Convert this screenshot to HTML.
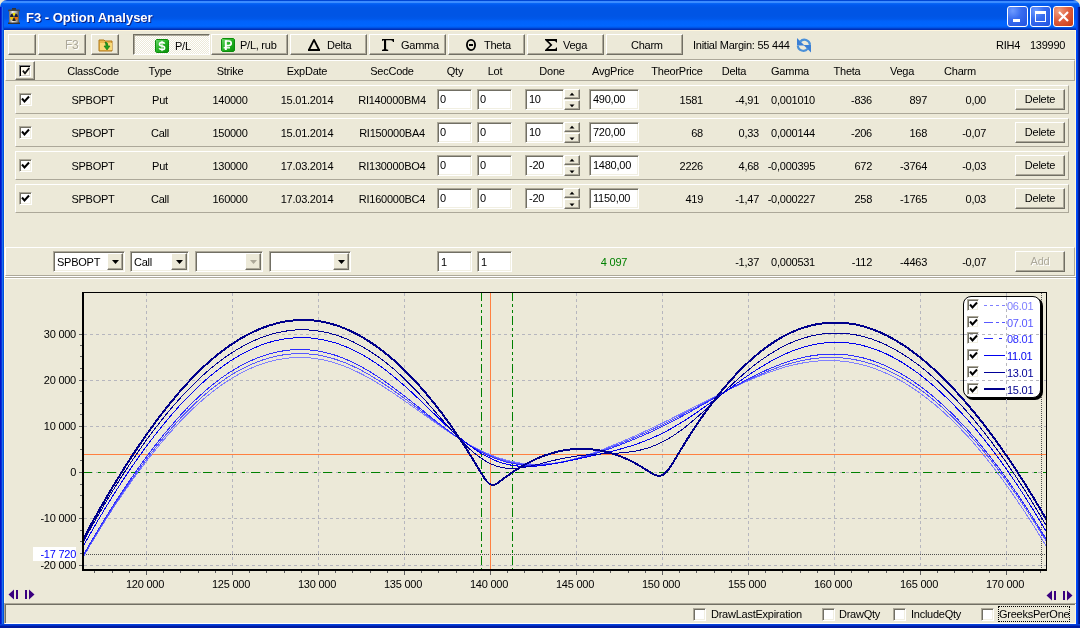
<!DOCTYPE html>
<html><head><meta charset="utf-8">
<style>
*{box-sizing:border-box;margin:0;padding:0}
html,body{width:1080px;height:628px;overflow:hidden;background:#ECE9D8}
body{position:relative;font-family:"Liberation Sans",sans-serif;font-size:11px;color:#000}
.a{position:absolute}
.t{position:absolute;will-change:transform;white-space:nowrap;line-height:13px;letter-spacing:-0.25px}
.c{text-align:center}
.r{text-align:right}
.btn{position:absolute;background:#ECE9D8;border-top:1px solid #fff;border-left:1px solid #fff;border-right:1px solid #716F64;border-bottom:1px solid #716F64;box-shadow:inset -1px -1px 0 #ACA899}
.inp{position:absolute;background:#fff;border-top:1px solid #ACA899;border-left:1px solid #ACA899;border-right:1px solid #fff;border-bottom:1px solid #fff;box-shadow:inset 1px 1px 0 #716F64,inset -1px -1px 0 #F1EFE2}
.pnl{position:absolute;border-top:1px solid #fff;border-left:1px solid #fff;border-right:1px solid #ACA899;border-bottom:1px solid #ACA899}
.cb{position:absolute;width:13px;height:13px;background:#fff;border-top:1px solid #ACA899;border-left:1px solid #ACA899;border-right:1px solid #fff;border-bottom:1px solid #fff;box-shadow:inset 1px 1px 0 #716F64,inset -1px -1px 0 #F1EFE2}
</style></head><body>
<!-- title bar -->
<div class="a" style="left:0;top:0;width:1080px;height:30px;border-radius:7px 7px 0 0;background:linear-gradient(#0046D5 0px,#0046D5 1px,#3C8CFF 1px,#3C8CFF 3px,#0A6AF8 3px,#0058EE 5px,#0055E5 8px,#0055E5 16px,#0058EA 19px,#0062FB 21px,#0066FF 26px,#0050E0 28px,#0030B8 29px,#0030B8 30px)"></div>
<!-- borders -->
<div class="a" style="left:0;top:7px;width:4px;height:621px;background:linear-gradient(90deg,#0014C8 0,#0014C8 1px,#0A30D8 1px,#0A30D8 2px,#1A6FEE 2px,#1A6FEE 3px,#0050DC 3px,#0050DC 4px)"></div>
<div class="a" style="left:1076px;top:7px;width:4px;height:621px;background:linear-gradient(90deg,#0046FF 0,#0046FF 1px,#0044E0 1px,#0044E0 2px,#0020A0 2px,#0020A0 3px,#001080 3px)"></div>
<div class="a" style="left:0;top:624px;width:1080px;height:4px;background:linear-gradient(#0841D9 0,#0841D9 1px,#0030C8 1px,#0030C8 2px,#001A9E 2px)"></div>
<div class="a" style="left:4px;top:30px;width:1px;height:594px;background:#FFF6DC"></div>
<div class="a" style="left:1075px;top:30px;width:1px;height:594px;background:#FFF6DC"></div>
<div class="a" style="left:4px;top:30px;width:1072px;height:1px;background:#FFF6DC"></div>

<div class="t" style="left:26px;top:10px;letter-spacing:0;font-size:13px;font-weight:bold;color:#fff;text-shadow:1px 1px 0 #0A1E80;line-height:16px">F3 - Option Analyser</div>
<svg class="a" style="left:7px;top:7px" width="14" height="18" viewBox="0 0 14 18">
<defs><linearGradient id="can" x1="0" x2="1"><stop offset="0" stop-color="#6a6a6a"/><stop offset="0.35" stop-color="#e8e8e8"/><stop offset="0.7" stop-color="#b0b0b0"/><stop offset="1" stop-color="#505050"/></linearGradient></defs>
<rect x="5" y="1" width="4" height="2" fill="#333"/>
<rect x="1" y="2.5" width="12" height="2" rx="1" fill="#444"/>
<rect x="2" y="4" width="10" height="12" fill="url(#can)"/>
<rect x="1" y="15.5" width="12" height="1.5" fill="#333"/>
<path d="M7 10 L5.2 6.3 A4 4 0 0 1 8.8 6.3 Z" fill="#f0e000"/>
<path d="M7 10 L3 10 A4 4 0 0 1 5.2 6.3 Z" fill="#1a1a3a"/>
<path d="M7 10 L8.8 6.3 A4 4 0 0 1 11 10 Z" fill="#1a1a3a"/>
<path d="M7 10 L3 10 A4 4 0 0 0 5 13.5 Z" fill="#f0c000"/>
<path d="M7 10 L11 10 A4 4 0 0 1 9 13.5 Z" fill="#f07000"/>
<path d="M7 10 L5 13.5 A4 4 0 0 0 9 13.5 Z" fill="#222"/>
</svg>
<!-- caption buttons -->
<div class="a" style="left:1007px;top:6px;width:21px;height:21px;border:1px solid #fff;border-radius:3px;background:radial-gradient(circle at 25% 20%,#6E9BFF 0,#3A6EF0 40%,#2052E0 100%)"><div class="a" style="left:5px;top:12px;width:7px;height:3px;background:#fff"></div></div>
<div class="a" style="left:1030px;top:6px;width:21px;height:21px;border:1px solid #fff;border-radius:3px;background:radial-gradient(circle at 25% 20%,#6E9BFF 0,#3A6EF0 40%,#2052E0 100%)"><div class="a" style="left:4px;top:4px;width:11px;height:11px;border:1px solid #fff;border-top-width:3px"></div></div>
<div class="a" style="left:1053px;top:6px;width:21px;height:21px;border:1px solid #fff;border-radius:3px;background:radial-gradient(circle at 25% 20%,#F0A080 0,#E06040 45%,#C83810 100%)">
<svg class="a" style="left:3px;top:3px" width="13" height="13"><path d="M2 2 L11 11 M11 2 L2 11" stroke="#fff" stroke-width="2.2"/></svg></div>

<!-- toolbar -->
<div class="btn" style="left:8px;top:34px;width:28px;height:21px"></div>
<div class="btn" style="left:38px;top:34px;width:48px;height:21px"><div class="t" style="right:6px;top:4px;color:#ACA899;text-shadow:1px 1px 0 #fff;font-size:12px">F3</div></div>
<div class="btn" style="left:91px;top:34px;width:28px;height:21px">
<svg class="a" style="left:6px;top:3px" width="16" height="14" viewBox="0 0 16 14"><path d="M1 2 h5 l1 1 h7 v10 h-13 z" fill="#E8B850" stroke="#B07818"/><path d="M2 5 h12 v7 h-12z" fill="#F8D878"/><path d="M7 4 q3 0 3 4 h2 l-3 4 l-3 -4 h2 q0 -2 -1 -4z" fill="#20A020" stroke="#107010" stroke-width="0.6"/></svg></div>
<div class="a" style="left:133px;top:34px;width:77px;height:21px;border-top:1px solid #716F64;border-left:1px solid #716F64;border-right:1px solid #fff;border-bottom:1px solid #fff;box-shadow:inset 1px 1px 0 #ACA899;background:repeating-conic-gradient(#fff 0 25%,#ECE9D8 0 50%) 0 0/2px 2px"></div>
<div class="btn" style="left:211px;top:34px;width:77px;height:21px"></div>
<div class="btn" style="left:290px;top:34px;width:77px;height:21px"></div>
<div class="btn" style="left:369px;top:34px;width:77px;height:21px"></div>
<div class="btn" style="left:448px;top:34px;width:77px;height:21px"></div>
<div class="btn" style="left:527px;top:34px;width:77px;height:21px"></div>
<div class="btn" style="left:606px;top:34px;width:77px;height:21px"></div>


<!-- toolbar contents -->
<svg class="a" style="left:155px;top:39px" width="14" height="14" viewBox="0 0 14 14"><defs><linearGradient id="gr" x1="0" y1="0" x2="1" y2="1"><stop offset="0" stop-color="#6CD86C"/><stop offset="0.5" stop-color="#22B022"/><stop offset="1" stop-color="#0A900A"/></linearGradient></defs><path d="M1.5 0.5 H12.5 L13.5 1.5 V12.5 L12.5 13.5 H1.5 L0.5 12.5 V1.5 Z" fill="url(#gr)" stroke="#0C8C0C" stroke-width="1"/><path d="M9.6 4.7 Q9.2 3.4 7 3.4 Q4.5 3.4 4.5 5.2 Q4.5 6.8 7 7 Q9.6 7.2 9.6 8.9 Q9.6 10.6 7 10.6 Q4.7 10.6 4.2 9.3" fill="none" stroke="#fff" stroke-width="1.6"/><path d="M7 1.8 V12.2" stroke="#fff" stroke-width="1"/></svg>
<div class="t" style="left:175px;top:40px">P/L</div>
<svg class="a" style="left:221px;top:38px" width="14" height="14" viewBox="0 0 14 14"><path d="M1.5 0.5 H12.5 L13.5 1.5 V12.5 L12.5 13.5 H1.5 L0.5 12.5 V1.5 Z" fill="url(#gr)" stroke="#0C8C0C" stroke-width="1"/><path d="M4.8 3 H7.6 Q10.2 3 10.2 5.3 Q10.2 7.6 7.6 7.6 H4.8" fill="none" stroke="#fff" stroke-width="1.7"/><path d="M4.8 2.2 V12" stroke="#fff" stroke-width="2"/><path d="M2.6 9.8 H9" stroke="#fff" stroke-width="1.4"/></svg>
<div class="t" style="left:240px;top:39px">P/L, rub</div>
<svg class="a" style="left:308px;top:39px" width="12" height="12" viewBox="0 0 12 12"><path d="M6 0.9 L11.1 11 L0.9 11 Z" fill="none" stroke="#000" stroke-width="1.8" stroke-linejoin="round"/><rect x="0" y="10" width="12" height="2" fill="#000"/></svg>
<div class="t" style="left:327px;top:39px">Delta</div>
<svg class="a" style="left:382px;top:39px" width="12" height="12" viewBox="0 0 12 12"><path d="M0 0 H12 V3 H11 Q10.8 1.3 9 1.3 H4.1 V10 Q4.3 10.7 6.2 10.8 V12 H0 V10.8 Q1.8 10.7 2 10 V1.3 Q1 1.3 0 2.2 Z" fill="#000"/></svg>
<div class="t" style="left:401px;top:39px">Gamma</div>
<svg class="a" style="left:466px;top:39px" width="10" height="12" viewBox="0 0 10 12"><ellipse cx="5" cy="6" rx="4.1" ry="5.1" fill="none" stroke="#000" stroke-width="1.8"/><rect x="3" y="5" width="4" height="2" fill="#000"/></svg>
<div class="t" style="left:484px;top:39px">Theta</div>
<svg class="a" style="left:545px;top:39px" width="12" height="12" viewBox="0 0 12 12"><path d="M0 0 H12 V3.5 H11.2 Q10.9 2 9.4 2 H3.4 L7.4 6 L3.1 10 H9.4 Q10.9 10 11.2 8.5 H12 V12 H0 V11 L5.1 6 L0 1 Z" fill="#000"/></svg>
<div class="t" style="left:563px;top:39px">Vega</div>
<div class="t" style="left:631px;top:39px">Charm</div>
<div class="t" style="left:693px;top:39px">Initial Margin: 55 444</div>
<svg class="a" style="left:796px;top:37px" width="16" height="16" viewBox="0 0 16 16"><path d="M1 1 L1 8.5 L8.5 8.5 Z" fill="#3A7FD5"/><path d="M4.2 4.6 A5.6 5.6 0 0 1 14 7.8" fill="none" stroke="#4A90D8" stroke-width="2.2"/><path d="M15 15.5 L15 8 L7.5 8 Z" fill="#3A7FD5"/><path d="M1.8 8.6 A5.6 5.6 0 0 0 11.8 11.6" fill="none" stroke="#4A90D8" stroke-width="2.2"/></svg>
<div class="t" style="left:996px;top:39px">RIH4</div><div class="t" style="left:1030px;top:39px">139990</div>



<!-- separator under toolbar -->
<div class="a" style="left:5px;top:59px;width:1070px;height:1px;background:#ACA899"></div>
<!-- header -->
<div class="pnl" style="left:5px;top:60px;width:1070px;height:21px"></div>
<div class="btn" style="left:15px;top:61px;width:20px;height:19px"><div class="a" style="left:3px;top:3px;width:12px;height:12px;background:#FFFBF0;border-top:1px solid #808080;border-left:1px solid #808080;border-right:1px solid #fff;border-bottom:1px solid #fff;box-shadow:inset 1px 1px 0 #000,inset -1px -1px 0 #D4D0C8"></div>
<svg class="a" style="left:6px;top:5px" width="8" height="9"><path d="M0.8 3.6 L3 6.3 L7.2 1" stroke="#111" fill="none" stroke-width="1.7"/></svg></div>
<div class="t c" style="left:53.2px;top:65px;width:80px">ClassCode</div>
<div class="t c" style="left:119.8px;top:65px;width:80px">Type</div>
<div class="t c" style="left:190.0px;top:65px;width:80px">Strike</div>
<div class="t c" style="left:267.0px;top:65px;width:80px">ExpDate</div>
<div class="t c" style="left:352.3px;top:65px;width:80px">SecCode</div>
<div class="t c" style="left:414.5px;top:65px;width:80px">Qty</div>
<div class="t c" style="left:454.8px;top:65px;width:80px">Lot</div>
<div class="t c" style="left:512.2px;top:65px;width:80px">Done</div>
<div class="t c" style="left:573.3px;top:65px;width:80px">AvgPrice</div>
<div class="t c" style="left:637.3px;top:65px;width:80px">TheorPrice</div>
<div class="t c" style="left:693.5px;top:65px;width:80px">Delta</div>
<div class="t c" style="left:750.0px;top:65px;width:80px">Gamma</div>
<div class="t c" style="left:806.7px;top:65px;width:80px">Theta</div>
<div class="t c" style="left:861.8px;top:65px;width:80px">Vega</div>
<div class="t c" style="left:920.0px;top:65px;width:80px">Charm</div>
<div class="pnl" style="left:15px;top:85px;width:1054px;height:29px"></div>
<div class="cb" style="left:19px;top:93px"></div><svg class="a" style="left:21px;top:95px" width="9" height="9"><path d="M1 3.5 L3.5 6.5 L8 1.5" stroke="#000" fill="none" stroke-width="2"/></svg>
<div class="t c" style="left:53.2px;top:94px;width:80px">SPBOPT</div>
<div class="t c" style="left:119.8px;top:94px;width:80px">Put</div>
<div class="t c" style="left:190.0px;top:94px;width:80px">140000</div>
<div class="t c" style="left:267.0px;top:94px;width:80px">15.01.2014</div>
<div class="t c" style="left:352.3px;top:94px;width:80px">RI140000BM4</div>
<div class="inp" style="left:437px;top:89px;width:35px;height:21px"><div class="t" style="left:2px;top:3px">0</div></div>
<div class="inp" style="left:477px;top:89px;width:35px;height:21px"><div class="t" style="left:2px;top:3px">0</div></div>
<div class="inp" style="left:525px;top:89px;width:39px;height:21px"><div class="t" style="left:3px;top:3px">10</div></div>
<div class="btn" style="left:564px;top:89px;width:16px;height:10px"><svg class="a" style="left:4px;top:2px" width="6" height="4"><path d="M0.5 3.5 L3 0.8 L5.5 3.5Z" fill="#000"/></svg></div>
<div class="btn" style="left:564px;top:100px;width:16px;height:10px"><svg class="a" style="left:4px;top:3px" width="6" height="4"><path d="M0.5 0.5 L3 3.2 L5.5 0.5Z" fill="#000"/></svg></div>
<div class="inp" style="left:589px;top:89px;width:50px;height:21px"><div class="t" style="left:3px;top:3px">490,00</div></div>
<div class="t r" style="left:623.0px;top:94px;width:80px">1581</div>
<div class="t r" style="left:679.0px;top:94px;width:80px">-4,91</div>
<div class="t r" style="left:735.2px;top:94px;width:80px">0,001010</div>
<div class="t r" style="left:791.5px;top:94px;width:80px">-836</div>
<div class="t r" style="left:847.4px;top:94px;width:80px">897</div>
<div class="t r" style="left:905.6px;top:94px;width:80px">0,00</div>
<div class="btn" style="left:1015px;top:89px;width:50px;height:21px"><div class="t c" style="left:0;top:3px;width:48px">Delete</div></div>
<div class="pnl" style="left:15px;top:118px;width:1054px;height:29px"></div>
<div class="cb" style="left:19px;top:126px"></div><svg class="a" style="left:21px;top:128px" width="9" height="9"><path d="M1 3.5 L3.5 6.5 L8 1.5" stroke="#000" fill="none" stroke-width="2"/></svg>
<div class="t c" style="left:53.2px;top:127px;width:80px">SPBOPT</div>
<div class="t c" style="left:119.8px;top:127px;width:80px">Call</div>
<div class="t c" style="left:190.0px;top:127px;width:80px">150000</div>
<div class="t c" style="left:267.0px;top:127px;width:80px">15.01.2014</div>
<div class="t c" style="left:352.3px;top:127px;width:80px">RI150000BA4</div>
<div class="inp" style="left:437px;top:122px;width:35px;height:21px"><div class="t" style="left:2px;top:3px">0</div></div>
<div class="inp" style="left:477px;top:122px;width:35px;height:21px"><div class="t" style="left:2px;top:3px">0</div></div>
<div class="inp" style="left:525px;top:122px;width:39px;height:21px"><div class="t" style="left:3px;top:3px">10</div></div>
<div class="btn" style="left:564px;top:122px;width:16px;height:10px"><svg class="a" style="left:4px;top:2px" width="6" height="4"><path d="M0.5 3.5 L3 0.8 L5.5 3.5Z" fill="#000"/></svg></div>
<div class="btn" style="left:564px;top:133px;width:16px;height:10px"><svg class="a" style="left:4px;top:3px" width="6" height="4"><path d="M0.5 0.5 L3 3.2 L5.5 0.5Z" fill="#000"/></svg></div>
<div class="inp" style="left:589px;top:122px;width:50px;height:21px"><div class="t" style="left:3px;top:3px">720,00</div></div>
<div class="t r" style="left:623.0px;top:127px;width:80px">68</div>
<div class="t r" style="left:679.0px;top:127px;width:80px">0,33</div>
<div class="t r" style="left:735.2px;top:127px;width:80px">0,000144</div>
<div class="t r" style="left:791.5px;top:127px;width:80px">-206</div>
<div class="t r" style="left:847.4px;top:127px;width:80px">168</div>
<div class="t r" style="left:905.6px;top:127px;width:80px">-0,07</div>
<div class="btn" style="left:1015px;top:122px;width:50px;height:21px"><div class="t c" style="left:0;top:3px;width:48px">Delete</div></div>
<div class="pnl" style="left:15px;top:151px;width:1054px;height:29px"></div>
<div class="cb" style="left:19px;top:159px"></div><svg class="a" style="left:21px;top:161px" width="9" height="9"><path d="M1 3.5 L3.5 6.5 L8 1.5" stroke="#000" fill="none" stroke-width="2"/></svg>
<div class="t c" style="left:53.2px;top:160px;width:80px">SPBOPT</div>
<div class="t c" style="left:119.8px;top:160px;width:80px">Put</div>
<div class="t c" style="left:190.0px;top:160px;width:80px">130000</div>
<div class="t c" style="left:267.0px;top:160px;width:80px">17.03.2014</div>
<div class="t c" style="left:352.3px;top:160px;width:80px">RI130000BO4</div>
<div class="inp" style="left:437px;top:155px;width:35px;height:21px"><div class="t" style="left:2px;top:3px">0</div></div>
<div class="inp" style="left:477px;top:155px;width:35px;height:21px"><div class="t" style="left:2px;top:3px">0</div></div>
<div class="inp" style="left:525px;top:155px;width:39px;height:21px"><div class="t" style="left:3px;top:3px">-20</div></div>
<div class="btn" style="left:564px;top:155px;width:16px;height:10px"><svg class="a" style="left:4px;top:2px" width="6" height="4"><path d="M0.5 3.5 L3 0.8 L5.5 3.5Z" fill="#000"/></svg></div>
<div class="btn" style="left:564px;top:166px;width:16px;height:10px"><svg class="a" style="left:4px;top:3px" width="6" height="4"><path d="M0.5 0.5 L3 3.2 L5.5 0.5Z" fill="#000"/></svg></div>
<div class="inp" style="left:589px;top:155px;width:50px;height:21px"><div class="t" style="left:3px;top:3px">1480,00</div></div>
<div class="t r" style="left:623.0px;top:160px;width:80px">2226</div>
<div class="t r" style="left:679.0px;top:160px;width:80px">4,68</div>
<div class="t r" style="left:735.2px;top:160px;width:80px">-0,000395</div>
<div class="t r" style="left:791.5px;top:160px;width:80px">672</div>
<div class="t r" style="left:847.4px;top:160px;width:80px">-3764</div>
<div class="t r" style="left:905.6px;top:160px;width:80px">-0,03</div>
<div class="btn" style="left:1015px;top:155px;width:50px;height:21px"><div class="t c" style="left:0;top:3px;width:48px">Delete</div></div>
<div class="pnl" style="left:15px;top:184px;width:1054px;height:29px"></div>
<div class="cb" style="left:19px;top:192px"></div><svg class="a" style="left:21px;top:194px" width="9" height="9"><path d="M1 3.5 L3.5 6.5 L8 1.5" stroke="#000" fill="none" stroke-width="2"/></svg>
<div class="t c" style="left:53.2px;top:193px;width:80px">SPBOPT</div>
<div class="t c" style="left:119.8px;top:193px;width:80px">Call</div>
<div class="t c" style="left:190.0px;top:193px;width:80px">160000</div>
<div class="t c" style="left:267.0px;top:193px;width:80px">17.03.2014</div>
<div class="t c" style="left:352.3px;top:193px;width:80px">RI160000BC4</div>
<div class="inp" style="left:437px;top:188px;width:35px;height:21px"><div class="t" style="left:2px;top:3px">0</div></div>
<div class="inp" style="left:477px;top:188px;width:35px;height:21px"><div class="t" style="left:2px;top:3px">0</div></div>
<div class="inp" style="left:525px;top:188px;width:39px;height:21px"><div class="t" style="left:3px;top:3px">-20</div></div>
<div class="btn" style="left:564px;top:188px;width:16px;height:10px"><svg class="a" style="left:4px;top:2px" width="6" height="4"><path d="M0.5 3.5 L3 0.8 L5.5 3.5Z" fill="#000"/></svg></div>
<div class="btn" style="left:564px;top:199px;width:16px;height:10px"><svg class="a" style="left:4px;top:3px" width="6" height="4"><path d="M0.5 0.5 L3 3.2 L5.5 0.5Z" fill="#000"/></svg></div>
<div class="inp" style="left:589px;top:188px;width:50px;height:21px"><div class="t" style="left:3px;top:3px">1150,00</div></div>
<div class="t r" style="left:623.0px;top:193px;width:80px">419</div>
<div class="t r" style="left:679.0px;top:193px;width:80px">-1,47</div>
<div class="t r" style="left:735.2px;top:193px;width:80px">-0,000227</div>
<div class="t r" style="left:791.5px;top:193px;width:80px">258</div>
<div class="t r" style="left:847.4px;top:193px;width:80px">-1765</div>
<div class="t r" style="left:905.6px;top:193px;width:80px">0,03</div>
<div class="btn" style="left:1015px;top:188px;width:50px;height:21px"><div class="t c" style="left:0;top:3px;width:48px">Delete</div></div>

<!-- add row -->
<div class="pnl" style="left:5px;top:247px;width:1070px;height:29px"></div>
<div class="a" style="left:5px;top:276px;width:1071px;height:1px;background:#fff"></div>
<div class="a" style="left:5px;top:277px;width:1071px;height:1px;background:#ACA899"></div>
<div class="a" style="left:5px;top:278px;width:1071px;height:1px;background:#fff"></div>

<div class="inp" style="left:53px;top:251px;width:72px;height:21px"><div class="t" style="left:3px;top:4px">SPBOPT</div>
<div class="btn" style="left:53px;top:1px;width:16px;height:17px"><svg class="a" style="left:4px;top:6px" width="7" height="4"><path d="M0 0 H7 L3.5 4Z" fill="#000"/></svg></div></div>
<div class="inp" style="left:130px;top:251px;width:59px;height:21px"><div class="t" style="left:3px;top:4px">Call</div>
<div class="btn" style="left:40px;top:1px;width:16px;height:17px"><svg class="a" style="left:4px;top:6px" width="7" height="4"><path d="M0 0 H7 L3.5 4Z" fill="#000"/></svg></div></div>
<div class="inp" style="left:195px;top:251px;width:68px;height:21px">
<div class="btn" style="left:49px;top:1px;width:16px;height:17px"><svg class="a" style="left:4px;top:6px" width="7" height="4"><path d="M0 0 H7 L3.5 4Z" fill="#ACA899"/></svg></div></div>
<div class="inp" style="left:269px;top:251px;width:82px;height:21px">
<div class="btn" style="left:63px;top:1px;width:16px;height:17px"><svg class="a" style="left:4px;top:6px" width="7" height="4"><path d="M0 0 H7 L3.5 4Z" fill="#000"/></svg></div></div>
<div class="inp" style="left:437px;top:251px;width:35px;height:21px"><div class="t" style="left:3px;top:4px">1</div></div>
<div class="inp" style="left:477px;top:251px;width:35px;height:21px"><div class="t" style="left:3px;top:4px">1</div></div>
<div class="t c" style="left:573.5px;top:256px;width:80px;color:#008000">4 097</div>
<div class="t r" style="left:679px;top:256px;width:80px">-1,37</div>
<div class="t r" style="left:735.2px;top:256px;width:80px">0,000531</div>
<div class="t r" style="left:791.5px;top:256px;width:80px">-112</div>
<div class="t r" style="left:847.4px;top:256px;width:80px">-4463</div>
<div class="t r" style="left:905.6px;top:256px;width:80px">-0,07</div>
<div class="btn" style="left:1015px;top:251px;width:50px;height:21px"><div class="t c" style="left:0;top:3px;width:48px;color:#ACA899;text-shadow:1px 1px 0 #fff">Add</div></div>

<!-- nav arrows -->
<svg class="a" style="left:8px;top:589px" width="28" height="12" viewBox="0 0 28 12"><path d="M0.5 5.5 L6 0.5 V10.5 Z M8 1 h2 v9 h-2z M17 1 h2 v9 h-2z M21 0.5 L26.5 5.5 L21 10.5Z" fill="#3A0080"/></svg>
<svg class="a" style="left:1046px;top:590px" width="28" height="12" viewBox="0 0 28 12"><path d="M0.5 5.5 L6 0.5 V10.5 Z M8 1 h2 v9 h-2z M17 1 h2 v9 h-2z M21 0.5 L26.5 5.5 L21 10.5Z" fill="#3A0080"/></svg>

<!-- status bar -->
<div class="a" style="left:4px;top:603px;width:1072px;height:21px;border-top:1px solid #ACA899;border-left:1px solid #ACA899;border-bottom:1px solid #fff;box-shadow:inset 0 1px 0 #fff"></div>
<div class="a" style="left:5px;top:604px;width:1070px;height:1px;background:#716F64"></div><div class="a" style="left:5px;top:604px;width:1px;height:19px;background:#716F64"></div>
<div class="cb" style="left:693px;top:608px"></div><div class="t" style="left:711px;top:608px">DrawLastExpiration</div>
<div class="cb" style="left:822px;top:608px"></div><div class="t" style="left:839px;top:608px">DrawQty</div>
<div class="cb" style="left:893px;top:608px"></div><div class="t" style="left:911px;top:608px">IncludeQty</div>
<div class="cb" style="left:981px;top:608px"></div><div class="t" style="left:999px;top:608px">GreeksPerOne</div>
<div class="a" style="left:998px;top:606px;width:72px;height:16px;border:1px dotted #000"></div>

<!-- chart -->
<svg class="a" style="left:0;top:0" width="1080" height="628" viewBox="0 0 1080 628">
<defs><clipPath id="pc"><rect x="84" y="293" width="962" height="276"/></clipPath></defs>
<line x1="146.5" y1="293" x2="146.5" y2="569" stroke="#B6B6BE" stroke-width="1" stroke-dasharray="3 3"/>
<line x1="232.5" y1="293" x2="232.5" y2="569" stroke="#B6B6BE" stroke-width="1" stroke-dasharray="3 3"/>
<line x1="318.5" y1="293" x2="318.5" y2="569" stroke="#B6B6BE" stroke-width="1" stroke-dasharray="3 3"/>
<line x1="404.5" y1="293" x2="404.5" y2="569" stroke="#B6B6BE" stroke-width="1" stroke-dasharray="3 3"/>
<line x1="490.5" y1="293" x2="490.5" y2="569" stroke="#B6B6BE" stroke-width="1" stroke-dasharray="3 3"/>
<line x1="576.5" y1="293" x2="576.5" y2="569" stroke="#B6B6BE" stroke-width="1" stroke-dasharray="3 3"/>
<line x1="662.5" y1="293" x2="662.5" y2="569" stroke="#B6B6BE" stroke-width="1" stroke-dasharray="3 3"/>
<line x1="748.5" y1="293" x2="748.5" y2="569" stroke="#B6B6BE" stroke-width="1" stroke-dasharray="3 3"/>
<line x1="834.5" y1="293" x2="834.5" y2="569" stroke="#B6B6BE" stroke-width="1" stroke-dasharray="3 3"/>
<line x1="920.5" y1="293" x2="920.5" y2="569" stroke="#B6B6BE" stroke-width="1" stroke-dasharray="3 3"/>
<line x1="1006.5" y1="293" x2="1006.5" y2="569" stroke="#B6B6BE" stroke-width="1" stroke-dasharray="3 3"/>
<line x1="84" y1="334.5" x2="1046" y2="334.5" stroke="#B6B6BE" stroke-width="1" stroke-dasharray="3 3"/>
<line x1="84" y1="380.5" x2="1046" y2="380.5" stroke="#B6B6BE" stroke-width="1" stroke-dasharray="3 3"/>
<line x1="84" y1="426.5" x2="1046" y2="426.5" stroke="#B6B6BE" stroke-width="1" stroke-dasharray="3 3"/>
<line x1="84" y1="518.5" x2="1046" y2="518.5" stroke="#B6B6BE" stroke-width="1" stroke-dasharray="3 3"/>
<line x1="84" y1="565.5" x2="1046" y2="565.5" stroke="#B6B6BE" stroke-width="1" stroke-dasharray="3 3"/>
<line x1="84" y1="554.5" x2="1046" y2="554.5" stroke="#505050" stroke-width="1" stroke-dasharray="1 1"/>
<line x1="1041.5" y1="293" x2="1041.5" y2="569" stroke="#505050" stroke-width="1" stroke-dasharray="1 1"/>
<line x1="84" y1="454.5" x2="1046" y2="454.5" stroke="#FF8040" stroke-width="1"/>
<line x1="490.5" y1="293" x2="490.5" y2="569" stroke="#FF8040" stroke-width="1"/>
<line x1="84" y1="472.5" x2="1046" y2="472.5" stroke="#B6B6BE" stroke-width="1" stroke-dasharray="3 3"/>
<line x1="83" y1="472.5" x2="1046" y2="472.5" stroke="#008000" stroke-width="1" stroke-dasharray="9 6 3 6"/>
<line x1="481.5" y1="292" x2="481.5" y2="569" stroke="#008000" stroke-width="1" stroke-dasharray="9 3 3 3 3 3"/>
<line x1="512.5" y1="292" x2="512.5" y2="569" stroke="#008000" stroke-width="1" stroke-dasharray="9 3 3 3 3 3"/>
<polyline clip-path="url(#pc)" points="81.1,560.5 82.5,558.1 83.9,555.8 85.3,553.4 86.7,551.0 88.1,548.7 89.4,546.3 90.8,544.0 92.2,541.7 93.6,539.4 95.0,537.1 96.4,534.8 97.7,532.6 99.1,530.3 100.5,528.1 101.9,525.8 103.3,523.6 104.6,521.4 106.0,519.3 107.4,517.1 108.8,514.9 110.2,512.8 111.6,510.6 112.9,508.5 114.3,506.4 115.7,504.3 117.1,502.2 118.5,500.2 119.9,498.1 121.2,496.1 122.6,494.1 124.0,492.0 125.4,490.0 126.8,488.1 128.2,486.1 129.5,484.1 130.9,482.2 132.3,480.2 133.7,478.3 135.1,476.4 136.5,474.5 137.8,472.6 139.2,470.8 140.6,468.9 142.0,467.1 143.4,465.2 144.8,463.4 146.1,461.6 147.5,459.8 148.9,458.1 150.3,456.3 151.7,454.6 153.1,452.8 154.4,451.1 155.8,449.4 157.2,447.7 158.6,446.0 160.0,444.3 161.3,442.7 162.7,441.0 164.1,439.4 165.5,437.8 166.9,436.2 168.3,434.6 169.6,433.0 171.0,431.5 172.4,429.9 173.8,428.4 175.2,426.9 176.6,425.4 177.9,423.9 179.3,422.4 180.7,421.0 182.1,419.5 183.5,418.1 184.9,416.7 186.2,415.3 187.6,413.9 189.0,412.5 190.4,411.2 191.8,409.9 193.2,408.5 194.5,407.2 195.9,405.9 197.3,404.7 198.7,403.4 200.1,402.2 201.5,400.9 202.8,399.7 204.2,398.5 205.6,397.4 207.0,396.2 208.4,395.1 209.7,394.0 211.1,392.8 212.5,391.8 213.9,390.7 215.3,389.6 216.7,388.6 218.0,387.6 219.4,386.6 220.8,385.6 222.2,384.6 223.6,383.6 225.0,382.7 226.3,381.8 227.7,380.9 229.1,380.0 230.5,379.1 231.9,378.3 233.3,377.4 234.6,376.6 236.0,375.8 237.4,375.0 238.8,374.3 240.2,373.5 241.6,372.8 242.9,372.1 244.3,371.4 245.7,370.7 247.1,370.0 248.5,369.4 249.9,368.7 251.2,368.1 252.6,367.5 254.0,367.0 255.4,366.4 256.8,365.8 258.1,365.3 259.5,364.8 260.9,364.3 262.3,363.8 263.7,363.4 265.1,362.9 266.4,362.5 267.8,362.1 269.2,361.7 270.6,361.4 272.0,361.0 273.4,360.7 274.7,360.3 276.1,360.0 277.5,359.7 278.9,359.5 280.3,359.2 281.7,359.0 283.0,358.8 284.4,358.6 285.8,358.4 287.2,358.2 288.6,358.1 290.0,357.9 291.3,357.8 292.7,357.7 294.1,357.7 295.5,357.6 296.9,357.5 298.3,357.5 299.6,357.5 301.0,357.5 302.4,357.5 303.8,357.6 305.2,357.6 306.6,357.7 307.9,357.8 309.3,357.9 310.7,358.0 312.1,358.2 313.5,358.3 314.8,358.5 316.2,358.7 317.6,358.9 319.0,359.1 320.4,359.4 321.8,359.6 323.1,359.9 324.5,360.2 325.9,360.5 327.3,360.9 328.7,361.2 330.1,361.6 331.4,361.9 332.8,362.3 334.2,362.7 335.6,363.2 337.0,363.6 338.4,364.1 339.7,364.6 341.1,365.0 342.5,365.5 343.9,366.1 345.3,366.6 346.7,367.2 348.0,367.7 349.4,368.3 350.8,368.9 352.2,369.5 353.6,370.2 355.0,370.8 356.3,371.5 357.7,372.1 359.1,372.8 360.5,373.5 361.9,374.2 363.2,374.9 364.6,375.7 366.0,376.4 367.4,377.2 368.8,377.9 370.2,378.7 371.5,379.5 372.9,380.3 374.3,381.1 375.7,381.9 377.1,382.7 378.5,383.6 379.8,384.4 381.2,385.3 382.6,386.1 384.0,387.0 385.4,387.9 386.8,388.8 388.1,389.7 389.5,390.6 390.9,391.5 392.3,392.4 393.7,393.3 395.1,394.3 396.4,395.2 397.8,396.1 399.2,397.1 400.6,398.0 402.0,399.0 403.4,399.9 404.7,400.9 406.1,401.9 407.5,402.8 408.9,403.8 410.3,404.8 411.7,405.8 413.0,406.8 414.4,407.7 415.8,408.7 417.2,409.7 418.6,410.7 419.9,411.7 421.3,412.7 422.7,413.7 424.1,414.7 425.5,415.6 426.9,416.6 428.2,417.6 429.6,418.6 431.0,419.6 432.4,420.6 433.8,421.5 435.2,422.5 436.5,423.5 437.9,424.4 439.3,425.4 440.7,426.4 442.1,427.3 443.5,428.3 444.8,429.2 446.2,430.1 447.6,431.1 449.0,432.0 450.4,432.9 451.8,433.8 453.1,434.7 454.5,435.6 455.9,436.5 457.3,437.3 458.7,438.2 460.1,439.1 461.4,439.9 462.8,440.7 464.2,441.6 465.6,442.4 467.0,443.2 468.3,444.0 469.7,444.7 471.1,445.5 472.5,446.3 473.9,447.0 475.3,447.7 476.6,448.4 478.0,449.1 479.4,449.8 480.8,450.5 482.2,451.1 483.6,451.8 484.9,452.4 486.3,453.0 487.7,453.6 489.1,454.2 490.5,454.8 491.9,455.3 493.2,455.9 494.6,456.4 496.0,456.9 497.4,457.4 498.8,457.8 500.2,458.3 501.5,458.7 502.9,459.1 504.3,459.6 505.7,459.9 507.1,460.3 508.5,460.7 509.8,461.0 511.2,461.3 512.6,461.6 514.0,461.9 515.4,462.2 516.8,462.4 518.1,462.7 519.5,462.9 520.9,463.1 522.3,463.3 523.7,463.4 525.0,463.6 526.4,463.7 527.8,463.8 529.2,463.9 530.6,464.0 532.0,464.1 533.3,464.1 534.7,464.2 536.1,464.2 537.5,464.2 538.9,464.2 540.3,464.2 541.6,464.1 543.0,464.1 544.4,464.0 545.8,463.9 547.2,463.8 548.6,463.7 549.9,463.5 551.3,463.4 552.7,463.2 554.1,463.1 555.5,462.9 556.9,462.7 558.2,462.4 559.6,462.2 561.0,462.0 562.4,461.7 563.8,461.4 565.2,461.1 566.5,460.9 567.9,460.5 569.3,460.2 570.7,459.9 572.1,459.5 573.4,459.2 574.8,458.8 576.2,458.4 577.6,458.0 579.0,457.6 580.4,457.2 581.7,456.8 583.1,456.3 584.5,455.9 585.9,455.4 587.3,455.0 588.7,454.5 590.0,454.0 591.4,453.5 592.8,453.0 594.2,452.5 595.6,452.0 597.0,451.5 598.3,451.0 599.7,450.5 601.1,449.9 602.5,449.4 603.9,448.9 605.3,448.3 606.6,447.8 608.0,447.2 609.4,446.7 610.8,446.1 612.2,445.6 613.6,445.0 614.9,444.4 616.3,443.9 617.7,443.3 619.1,442.7 620.5,442.1 621.8,441.6 623.2,441.0 624.6,440.4 626.0,439.8 627.4,439.2 628.8,438.6 630.1,438.0 631.5,437.4 632.9,436.8 634.3,436.2 635.7,435.6 637.1,434.9 638.4,434.3 639.8,433.7 641.2,433.1 642.6,432.4 644.0,431.8 645.4,431.1 646.7,430.5 648.1,429.9 649.5,429.2 650.9,428.6 652.3,427.9 653.7,427.3 655.0,426.6 656.4,425.9 657.8,425.3 659.2,424.6 660.6,423.9 662.0,423.3 663.3,422.6 664.7,421.9 666.1,421.2 667.5,420.6 668.9,419.9 670.3,419.2 671.6,418.5 673.0,417.8 674.4,417.1 675.8,416.4 677.2,415.7 678.5,415.0 679.9,414.3 681.3,413.6 682.7,412.9 684.1,412.2 685.5,411.5 686.8,410.8 688.2,410.1 689.6,409.4 691.0,408.7 692.4,408.0 693.8,407.3 695.1,406.6 696.5,405.9 697.9,405.2 699.3,404.5 700.7,403.8 702.1,403.1 703.4,402.4 704.8,401.7 706.2,400.9 707.6,400.2 709.0,399.5 710.4,398.8 711.7,398.1 713.1,397.4 714.5,396.7 715.9,396.0 717.3,395.4 718.7,394.7 720.0,394.0 721.4,393.3 722.8,392.6 724.2,391.9 725.6,391.2 726.9,390.6 728.3,389.9 729.7,389.2 731.1,388.6 732.5,387.9 733.9,387.2 735.2,386.6 736.6,385.9 738.0,385.3 739.4,384.7 740.8,384.0 742.2,383.4 743.5,382.8 744.9,382.1 746.3,381.5 747.7,380.9 749.1,380.3 750.5,379.7 751.8,379.1 753.2,378.5 754.6,378.0 756.0,377.4 757.4,376.8 758.8,376.3 760.1,375.7 761.5,375.2 762.9,374.6 764.3,374.1 765.7,373.6 767.1,373.1 768.4,372.5 769.8,372.0 771.2,371.6 772.6,371.1 774.0,370.6 775.4,370.1 776.7,369.7 778.1,369.2 779.5,368.8 780.9,368.4 782.3,368.0 783.6,367.5 785.0,367.1 786.4,366.8 787.8,366.4 789.2,366.0 790.6,365.7 791.9,365.3 793.3,365.0 794.7,364.7 796.1,364.3 797.5,364.0 798.9,363.7 800.2,363.5 801.6,363.2 803.0,362.9 804.4,362.7 805.8,362.5 807.2,362.3 808.5,362.1 809.9,361.9 811.3,361.7 812.7,361.5 814.1,361.4 815.5,361.2 816.8,361.1 818.2,361.0 819.6,360.9 821.0,360.8 822.4,360.7 823.8,360.7 825.1,360.6 826.5,360.6 827.9,360.6 829.3,360.6 830.7,360.6 832.0,360.6 833.4,360.6 834.8,360.7 836.2,360.8 837.6,360.8 839.0,360.9 840.3,361.1 841.7,361.2 843.1,361.3 844.5,361.5 845.9,361.6 847.3,361.8 848.6,362.0 850.0,362.3 851.4,362.5 852.8,362.7 854.2,363.0 855.6,363.3 856.9,363.6 858.3,363.9 859.7,364.2 861.1,364.5 862.5,364.9 863.9,365.2 865.2,365.6 866.6,366.0 868.0,366.4 869.4,366.9 870.8,367.3 872.2,367.8 873.5,368.3 874.9,368.7 876.3,369.2 877.7,369.8 879.1,370.3 880.5,370.9 881.8,371.4 883.2,372.0 884.6,372.6 886.0,373.2 887.4,373.9 888.7,374.5 890.1,375.2 891.5,375.8 892.9,376.5 894.3,377.2 895.7,377.9 897.0,378.7 898.4,379.4 899.8,380.2 901.2,381.0 902.6,381.8 904.0,382.6 905.3,383.4 906.7,384.3 908.1,385.1 909.5,386.0 910.9,386.9 912.3,387.8 913.6,388.7 915.0,389.6 916.4,390.6 917.8,391.5 919.2,392.5 920.6,393.5 921.9,394.5 923.3,395.5 924.7,396.6 926.1,397.6 927.5,398.7 928.9,399.8 930.2,400.9 931.6,402.0 933.0,403.1 934.4,404.2 935.8,405.4 937.1,406.6 938.5,407.7 939.9,408.9 941.3,410.2 942.7,411.4 944.1,412.6 945.4,413.9 946.8,415.2 948.2,416.5 949.6,417.8 951.0,419.1 952.4,420.4 953.7,421.8 955.1,423.2 956.5,424.6 957.9,426.0 959.3,427.4 960.7,428.8 962.0,430.3 963.4,431.7 964.8,433.2 966.2,434.7 967.6,436.2 969.0,437.7 970.3,439.3 971.7,440.8 973.1,442.4 974.5,444.0 975.9,445.6 977.3,447.2 978.6,448.9 980.0,450.5 981.4,452.2 982.8,453.9 984.2,455.6 985.5,457.3 986.9,459.1 988.3,460.8 989.7,462.6 991.1,464.3 992.5,466.1 993.8,467.9 995.2,469.8 996.6,471.6 998.0,473.5 999.4,475.3 1000.8,477.2 1002.1,479.1 1003.5,481.0 1004.9,482.9 1006.3,484.9 1007.7,486.8 1009.1,488.8 1010.4,490.7 1011.8,492.7 1013.2,494.7 1014.6,496.8 1016.0,498.8 1017.4,500.8 1018.7,502.9 1020.1,505.0 1021.5,507.0 1022.9,509.1 1024.3,511.2 1025.7,513.4 1027.0,515.5 1028.4,517.6 1029.8,519.8 1031.2,521.9 1032.6,524.1 1034.0,526.3 1035.3,528.5 1036.7,530.7 1038.1,533.0 1039.5,535.2 1040.9,537.4 1042.2,539.7 1043.6,542.0 1045.0,544.2 1046.4,546.5 1047.8,548.8" fill="none" stroke="#8080FF" stroke-width="1.0" stroke-linejoin="round" shape-rendering="crispEdges"/>
<polyline clip-path="url(#pc)" points="81.1,560.6 82.5,558.2 83.9,555.8 85.3,553.4 86.7,551.0 88.1,548.6 89.4,546.2 90.8,543.9 92.2,541.5 93.6,539.2 95.0,536.8 96.4,534.5 97.7,532.2 99.1,529.9 100.5,527.7 101.9,525.4 103.3,523.1 104.6,520.9 106.0,518.7 107.4,516.5 108.8,514.3 110.2,512.1 111.6,509.9 112.9,507.7 114.3,505.6 115.7,503.4 117.1,501.3 118.5,499.2 119.9,497.1 121.2,495.0 122.6,492.9 124.0,490.9 125.4,488.8 126.8,486.8 128.2,484.8 129.5,482.8 130.9,480.8 132.3,478.8 133.7,476.8 135.1,474.9 136.5,472.9 137.8,471.0 139.2,469.1 140.6,467.2 142.0,465.3 143.4,463.4 144.8,461.5 146.1,459.7 147.5,457.9 148.9,456.0 150.3,454.2 151.7,452.4 153.1,450.7 154.4,448.9 155.8,447.1 157.2,445.4 158.6,443.7 160.0,442.0 161.3,440.3 162.7,438.6 164.1,436.9 165.5,435.3 166.9,433.6 168.3,432.0 169.6,430.4 171.0,428.8 172.4,427.2 173.8,425.6 175.2,424.1 176.6,422.5 177.9,421.0 179.3,419.5 180.7,418.0 182.1,416.5 183.5,415.1 184.9,413.6 186.2,412.2 187.6,410.8 189.0,409.4 190.4,408.0 191.8,406.7 193.2,405.3 194.5,404.0 195.9,402.7 197.3,401.4 198.7,400.1 200.1,398.9 201.5,397.6 202.8,396.4 204.2,395.2 205.6,394.0 207.0,392.8 208.4,391.7 209.7,390.5 211.1,389.4 212.5,388.3 213.9,387.2 215.3,386.2 216.7,385.1 218.0,384.1 219.4,383.1 220.8,382.1 222.2,381.1 223.6,380.1 225.0,379.2 226.3,378.2 227.7,377.3 229.1,376.4 230.5,375.5 231.9,374.7 233.3,373.8 234.6,373.0 236.0,372.2 237.4,371.4 238.8,370.6 240.2,369.9 241.6,369.1 242.9,368.4 244.3,367.7 245.7,367.0 247.1,366.4 248.5,365.7 249.9,365.1 251.2,364.4 252.6,363.8 254.0,363.3 255.4,362.7 256.8,362.1 258.1,361.6 259.5,361.1 260.9,360.6 262.3,360.1 263.7,359.6 265.1,359.2 266.4,358.8 267.8,358.3 269.2,358.0 270.6,357.6 272.0,357.2 273.4,356.9 274.7,356.5 276.1,356.2 277.5,355.9 278.9,355.7 280.3,355.4 281.7,355.2 283.0,354.9 284.4,354.7 285.8,354.6 287.2,354.4 288.6,354.2 290.0,354.1 291.3,354.0 292.7,353.9 294.1,353.8 295.5,353.7 296.9,353.7 298.3,353.6 299.6,353.6 301.0,353.6 302.4,353.7 303.8,353.7 305.2,353.7 306.6,353.8 307.9,353.9 309.3,354.0 310.7,354.1 312.1,354.3 313.5,354.4 314.8,354.6 316.2,354.8 317.6,355.0 319.0,355.3 320.4,355.5 321.8,355.8 323.1,356.1 324.5,356.3 325.9,356.7 327.3,357.0 328.7,357.3 330.1,357.7 331.4,358.1 332.8,358.5 334.2,358.9 335.6,359.4 337.0,359.8 338.4,360.3 339.7,360.8 341.1,361.3 342.5,361.8 343.9,362.3 345.3,362.9 346.7,363.4 348.0,364.0 349.4,364.6 350.8,365.2 352.2,365.9 353.6,366.5 355.0,367.2 356.3,367.8 357.7,368.5 359.1,369.2 360.5,369.9 361.9,370.7 363.2,371.4 364.6,372.2 366.0,372.9 367.4,373.7 368.8,374.5 370.2,375.3 371.5,376.1 372.9,377.0 374.3,377.8 375.7,378.7 377.1,379.5 378.5,380.4 379.8,381.3 381.2,382.2 382.6,383.1 384.0,384.0 385.4,384.9 386.8,385.8 388.1,386.8 389.5,387.7 390.9,388.7 392.3,389.6 393.7,390.6 395.1,391.6 396.4,392.6 397.8,393.5 399.2,394.5 400.6,395.5 402.0,396.5 403.4,397.6 404.7,398.6 406.1,399.6 407.5,400.6 408.9,401.7 410.3,402.7 411.7,403.7 413.0,404.8 414.4,405.8 415.8,406.9 417.2,407.9 418.6,409.0 419.9,410.0 421.3,411.1 422.7,412.1 424.1,413.2 425.5,414.2 426.9,415.3 428.2,416.3 429.6,417.3 431.0,418.4 432.4,419.4 433.8,420.5 435.2,421.5 436.5,422.5 437.9,423.6 439.3,424.6 440.7,425.6 442.1,426.6 443.5,427.6 444.8,428.6 446.2,429.6 447.6,430.6 449.0,431.6 450.4,432.6 451.8,433.5 453.1,434.5 454.5,435.4 455.9,436.4 457.3,437.3 458.7,438.2 460.1,439.1 461.4,440.0 462.8,440.9 464.2,441.8 465.6,442.6 467.0,443.5 468.3,444.3 469.7,445.1 471.1,445.9 472.5,446.7 473.9,447.5 475.3,448.3 476.6,449.0 478.0,449.8 479.4,450.5 480.8,451.2 482.2,451.9 483.6,452.5 484.9,453.2 486.3,453.8 487.7,454.4 489.1,455.0 490.5,455.6 491.9,456.2 493.2,456.7 494.6,457.3 496.0,457.8 497.4,458.3 498.8,458.8 500.2,459.2 501.5,459.7 502.9,460.1 504.3,460.5 505.7,460.9 507.1,461.2 508.5,461.6 509.8,461.9 511.2,462.2 512.6,462.5 514.0,462.8 515.4,463.0 516.8,463.3 518.1,463.5 519.5,463.7 520.9,463.9 522.3,464.0 523.7,464.2 525.0,464.3 526.4,464.4 527.8,464.5 529.2,464.6 530.6,464.6 532.0,464.6 533.3,464.7 534.7,464.7 536.1,464.7 537.5,464.6 538.9,464.6 540.3,464.5 541.6,464.5 543.0,464.4 544.4,464.3 545.8,464.1 547.2,464.0 548.6,463.9 549.9,463.7 551.3,463.5 552.7,463.3 554.1,463.1 555.5,462.9 556.9,462.7 558.2,462.5 559.6,462.2 561.0,462.0 562.4,461.7 563.8,461.4 565.2,461.1 566.5,460.8 567.9,460.5 569.3,460.2 570.7,459.9 572.1,459.5 573.4,459.2 574.8,458.8 576.2,458.5 577.6,458.1 579.0,457.7 580.4,457.3 581.7,456.9 583.1,456.5 584.5,456.1 585.9,455.7 587.3,455.3 588.7,454.9 590.0,454.4 591.4,454.0 592.8,453.5 594.2,453.1 595.6,452.6 597.0,452.2 598.3,451.7 599.7,451.2 601.1,450.7 602.5,450.2 603.9,449.7 605.3,449.2 606.6,448.7 608.0,448.2 609.4,447.7 610.8,447.2 612.2,446.7 613.6,446.1 614.9,445.6 616.3,445.1 617.7,444.5 619.1,444.0 620.5,443.4 621.8,442.9 623.2,442.3 624.6,441.8 626.0,441.2 627.4,440.6 628.8,440.0 630.1,439.5 631.5,438.9 632.9,438.3 634.3,437.7 635.7,437.1 637.1,436.5 638.4,435.9 639.8,435.3 641.2,434.6 642.6,434.0 644.0,433.4 645.4,432.8 646.7,432.1 648.1,431.5 649.5,430.8 650.9,430.2 652.3,429.6 653.7,428.9 655.0,428.2 656.4,427.6 657.8,426.9 659.2,426.3 660.6,425.6 662.0,424.9 663.3,424.2 664.7,423.5 666.1,422.9 667.5,422.2 668.9,421.5 670.3,420.8 671.6,420.1 673.0,419.4 674.4,418.7 675.8,418.0 677.2,417.3 678.5,416.5 679.9,415.8 681.3,415.1 682.7,414.4 684.1,413.7 685.5,412.9 686.8,412.2 688.2,411.5 689.6,410.7 691.0,410.0 692.4,409.3 693.8,408.5 695.1,407.8 696.5,407.1 697.9,406.3 699.3,405.6 700.7,404.8 702.1,404.1 703.4,403.3 704.8,402.6 706.2,401.9 707.6,401.1 709.0,400.4 710.4,399.6 711.7,398.9 713.1,398.1 714.5,397.4 715.9,396.6 717.3,395.9 718.7,395.2 720.0,394.4 721.4,393.7 722.8,393.0 724.2,392.2 725.6,391.5 726.9,390.8 728.3,390.0 729.7,389.3 731.1,388.6 732.5,387.9 733.9,387.2 735.2,386.5 736.6,385.8 738.0,385.1 739.4,384.4 740.8,383.7 742.2,383.0 743.5,382.3 744.9,381.6 746.3,380.9 747.7,380.3 749.1,379.6 750.5,379.0 751.8,378.3 753.2,377.7 754.6,377.0 756.0,376.4 757.4,375.8 758.8,375.2 760.1,374.6 761.5,374.0 762.9,373.4 764.3,372.8 765.7,372.2 767.1,371.6 768.4,371.1 769.8,370.5 771.2,370.0 772.6,369.5 774.0,368.9 775.4,368.4 776.7,367.9 778.1,367.4 779.5,366.9 780.9,366.5 782.3,366.0 783.6,365.5 785.0,365.1 786.4,364.7 787.8,364.2 789.2,363.8 790.6,363.4 791.9,363.1 793.3,362.7 794.7,362.3 796.1,362.0 797.5,361.6 798.9,361.3 800.2,361.0 801.6,360.7 803.0,360.4 804.4,360.1 805.8,359.9 807.2,359.6 808.5,359.4 809.9,359.1 811.3,358.9 812.7,358.7 814.1,358.5 815.5,358.4 816.8,358.2 818.2,358.1 819.6,357.9 821.0,357.8 822.4,357.7 823.8,357.6 825.1,357.6 826.5,357.5 827.9,357.5 829.3,357.5 830.7,357.4 832.0,357.4 833.4,357.5 834.8,357.5 836.2,357.5 837.6,357.6 839.0,357.7 840.3,357.8 841.7,357.9 843.1,358.0 844.5,358.1 845.9,358.3 847.3,358.5 848.6,358.6 850.0,358.8 851.4,359.0 852.8,359.3 854.2,359.5 855.6,359.8 856.9,360.1 858.3,360.4 859.7,360.7 861.1,361.0 862.5,361.3 863.9,361.7 865.2,362.1 866.6,362.4 868.0,362.9 869.4,363.3 870.8,363.7 872.2,364.2 873.5,364.6 874.9,365.1 876.3,365.6 877.7,366.1 879.1,366.7 880.5,367.2 881.8,367.8 883.2,368.3 884.6,368.9 886.0,369.5 887.4,370.2 888.7,370.8 890.1,371.5 891.5,372.1 892.9,372.8 894.3,373.5 895.7,374.3 897.0,375.0 898.4,375.7 899.8,376.5 901.2,377.3 902.6,378.1 904.0,378.9 905.3,379.7 906.7,380.6 908.1,381.4 909.5,382.3 910.9,383.2 912.3,384.1 913.6,385.0 915.0,386.0 916.4,386.9 917.8,387.9 919.2,388.9 920.6,389.9 921.9,390.9 923.3,391.9 924.7,393.0 926.1,394.0 927.5,395.1 928.9,396.2 930.2,397.3 931.6,398.4 933.0,399.5 934.4,400.7 935.8,401.9 937.1,403.0 938.5,404.2 939.9,405.4 941.3,406.6 942.7,407.9 944.1,409.1 945.4,410.4 946.8,411.7 948.2,413.0 949.6,414.3 951.0,415.6 952.4,416.9 953.7,418.3 955.1,419.7 956.5,421.1 957.9,422.4 959.3,423.9 960.7,425.3 962.0,426.7 963.4,428.2 964.8,429.7 966.2,431.1 967.6,432.6 969.0,434.2 970.3,435.7 971.7,437.2 973.1,438.8 974.5,440.4 975.9,442.0 977.3,443.6 978.6,445.2 980.0,446.8 981.4,448.5 982.8,450.1 984.2,451.8 985.5,453.5 986.9,455.2 988.3,456.9 989.7,458.7 991.1,460.4 992.5,462.2 993.8,464.0 995.2,465.8 996.6,467.6 998.0,469.4 999.4,471.2 1000.8,473.1 1002.1,474.9 1003.5,476.8 1004.9,478.7 1006.3,480.6 1007.7,482.5 1009.1,484.5 1010.4,486.4 1011.8,488.4 1013.2,490.3 1014.6,492.3 1016.0,494.3 1017.4,496.3 1018.7,498.4 1020.1,500.4 1021.5,502.4 1022.9,504.5 1024.3,506.6 1025.7,508.7 1027.0,510.8 1028.4,512.9 1029.8,515.0 1031.2,517.2 1032.6,519.3 1034.0,521.5 1035.3,523.7 1036.7,525.8 1038.1,528.0 1039.5,530.3 1040.9,532.5 1042.2,534.7 1043.6,537.0 1045.0,539.2 1046.4,541.5 1047.8,543.8" fill="none" stroke="#5858FF" stroke-width="1.0" stroke-linejoin="round" shape-rendering="crispEdges"/>
<polyline clip-path="url(#pc)" points="81.1,559.1 82.5,556.7 83.9,554.2 85.3,551.8 86.7,549.4 88.1,547.0 89.4,544.6 90.8,542.2 92.2,539.9 93.6,537.5 95.0,535.2 96.4,532.9 97.7,530.5 99.1,528.2 100.5,525.9 101.9,523.7 103.3,521.4 104.6,519.1 106.0,516.9 107.4,514.7 108.8,512.4 110.2,510.2 111.6,508.0 112.9,505.9 114.3,503.7 115.7,501.5 117.1,499.4 118.5,497.3 119.9,495.2 121.2,493.1 122.6,491.0 124.0,488.9 125.4,486.8 126.8,484.8 128.2,482.7 129.5,480.7 130.9,478.7 132.3,476.7 133.7,474.7 135.1,472.7 136.5,470.7 137.8,468.8 139.2,466.9 140.6,464.9 142.0,463.0 143.4,461.1 144.8,459.2 146.1,457.4 147.5,455.5 148.9,453.7 150.3,451.8 151.7,450.0 153.1,448.2 154.4,446.4 155.8,444.6 157.2,442.9 158.6,441.1 160.0,439.4 161.3,437.6 162.7,435.9 164.1,434.2 165.5,432.6 166.9,430.9 168.3,429.2 169.6,427.6 171.0,426.0 172.4,424.4 173.8,422.8 175.2,421.2 176.6,419.6 177.9,418.1 179.3,416.5 180.7,415.0 182.1,413.5 183.5,412.0 184.9,410.6 186.2,409.1 187.6,407.7 189.0,406.2 190.4,404.8 191.8,403.5 193.2,402.1 194.5,400.7 195.9,399.4 197.3,398.1 198.7,396.8 200.1,395.5 201.5,394.3 202.8,393.0 204.2,391.8 205.6,390.6 207.0,389.4 208.4,388.2 209.7,387.0 211.1,385.9 212.5,384.8 213.9,383.7 215.3,382.6 216.7,381.5 218.0,380.5 219.4,379.5 220.8,378.4 222.2,377.4 223.6,376.5 225.0,375.5 226.3,374.6 227.7,373.6 229.1,372.7 230.5,371.8 231.9,371.0 233.3,370.1 234.6,369.3 236.0,368.5 237.4,367.7 238.8,366.9 240.2,366.1 241.6,365.3 242.9,364.6 244.3,363.9 245.7,363.2 247.1,362.5 248.5,361.9 249.9,361.2 251.2,360.6 252.6,360.0 254.0,359.4 255.4,358.8 256.8,358.2 258.1,357.7 259.5,357.2 260.9,356.7 262.3,356.2 263.7,355.7 265.1,355.3 266.4,354.8 267.8,354.4 269.2,354.0 270.6,353.6 272.0,353.2 273.4,352.9 274.7,352.6 276.1,352.2 277.5,351.9 278.9,351.7 280.3,351.4 281.7,351.2 283.0,350.9 284.4,350.7 285.8,350.5 287.2,350.3 288.6,350.2 290.0,350.0 291.3,349.9 292.7,349.8 294.1,349.7 295.5,349.7 296.9,349.6 298.3,349.6 299.6,349.6 301.0,349.6 302.4,349.6 303.8,349.6 305.2,349.7 306.6,349.7 307.9,349.8 309.3,349.9 310.7,350.1 312.1,350.2 313.5,350.4 314.8,350.5 316.2,350.7 317.6,351.0 319.0,351.2 320.4,351.4 321.8,351.7 323.1,352.0 324.5,352.3 325.9,352.6 327.3,353.0 328.7,353.3 330.1,353.7 331.4,354.1 332.8,354.5 334.2,354.9 335.6,355.4 337.0,355.8 338.4,356.3 339.7,356.8 341.1,357.3 342.5,357.9 343.9,358.4 345.3,359.0 346.7,359.6 348.0,360.2 349.4,360.8 350.8,361.4 352.2,362.1 353.6,362.7 355.0,363.4 356.3,364.1 357.7,364.8 359.1,365.5 360.5,366.3 361.9,367.0 363.2,367.8 364.6,368.6 366.0,369.4 367.4,370.2 368.8,371.0 370.2,371.9 371.5,372.7 372.9,373.6 374.3,374.5 375.7,375.3 377.1,376.2 378.5,377.1 379.8,378.1 381.2,379.0 382.6,379.9 384.0,380.9 385.4,381.9 386.8,382.8 388.1,383.8 389.5,384.8 390.9,385.8 392.3,386.8 393.7,387.8 395.1,388.9 396.4,389.9 397.8,390.9 399.2,392.0 400.6,393.0 402.0,394.1 403.4,395.2 404.7,396.2 406.1,397.3 407.5,398.4 408.9,399.5 410.3,400.6 411.7,401.7 413.0,402.8 414.4,403.9 415.8,405.0 417.2,406.1 418.6,407.2 419.9,408.3 421.3,409.4 422.7,410.5 424.1,411.6 425.5,412.7 426.9,413.8 428.2,414.9 429.6,416.1 431.0,417.2 432.4,418.3 433.8,419.4 435.2,420.5 436.5,421.6 437.9,422.7 439.3,423.7 440.7,424.8 442.1,425.9 443.5,427.0 444.8,428.0 446.2,429.1 447.6,430.1 449.0,431.2 450.4,432.2 451.8,433.2 453.1,434.2 454.5,435.2 455.9,436.2 457.3,437.2 458.7,438.2 460.1,439.1 461.4,440.1 462.8,441.0 464.2,441.9 465.6,442.8 467.0,443.7 468.3,444.6 469.7,445.5 471.1,446.3 472.5,447.2 473.9,448.0 475.3,448.8 476.6,449.6 478.0,450.3 479.4,451.1 480.8,451.8 482.2,452.5 483.6,453.2 484.9,453.9 486.3,454.6 487.7,455.2 489.1,455.8 490.5,456.4 491.9,457.0 493.2,457.6 494.6,458.1 496.0,458.7 497.4,459.2 498.8,459.7 500.2,460.1 501.5,460.6 502.9,461.0 504.3,461.4 505.7,461.8 507.1,462.2 508.5,462.5 509.8,462.8 511.2,463.1 512.6,463.4 514.0,463.7 515.4,463.9 516.8,464.2 518.1,464.4 519.5,464.6 520.9,464.7 522.3,464.9 523.7,465.0 525.0,465.1 526.4,465.2 527.8,465.3 529.2,465.3 530.6,465.4 532.0,465.4 533.3,465.4 534.7,465.4 536.1,465.4 537.5,465.3 538.9,465.3 540.3,465.2 541.6,465.1 543.0,465.0 544.4,464.9 545.8,464.8 547.2,464.6 548.6,464.5 549.9,464.3 551.3,464.1 552.7,463.9 554.1,463.7 555.5,463.5 556.9,463.3 558.2,463.0 559.6,462.8 561.0,462.5 562.4,462.2 563.8,462.0 565.2,461.7 566.5,461.4 567.9,461.1 569.3,460.8 570.7,460.4 572.1,460.1 573.4,459.8 574.8,459.4 576.2,459.1 577.6,458.7 579.0,458.3 580.4,458.0 581.7,457.6 583.1,457.2 584.5,456.8 585.9,456.4 587.3,456.0 588.7,455.6 590.0,455.2 591.4,454.8 592.8,454.3 594.2,453.9 595.6,453.5 597.0,453.0 598.3,452.6 599.7,452.1 601.1,451.7 602.5,451.2 603.9,450.7 605.3,450.2 606.6,449.8 608.0,449.3 609.4,448.8 610.8,448.3 612.2,447.8 613.6,447.3 614.9,446.8 616.3,446.3 617.7,445.8 619.1,445.2 620.5,444.7 621.8,444.2 623.2,443.7 624.6,443.1 626.0,442.6 627.4,442.0 628.8,441.5 630.1,440.9 631.5,440.3 632.9,439.8 634.3,439.2 635.7,438.6 637.1,438.0 638.4,437.4 639.8,436.8 641.2,436.2 642.6,435.6 644.0,435.0 645.4,434.4 646.7,433.8 648.1,433.2 649.5,432.5 650.9,431.9 652.3,431.2 653.7,430.6 655.0,429.9 656.4,429.3 657.8,428.6 659.2,428.0 660.6,427.3 662.0,426.6 663.3,425.9 664.7,425.2 666.1,424.5 667.5,423.8 668.9,423.1 670.3,422.4 671.6,421.7 673.0,421.0 674.4,420.3 675.8,419.5 677.2,418.8 678.5,418.1 679.9,417.3 681.3,416.6 682.7,415.9 684.1,415.1 685.5,414.3 686.8,413.6 688.2,412.8 689.6,412.1 691.0,411.3 692.4,410.5 693.8,409.7 695.1,409.0 696.5,408.2 697.9,407.4 699.3,406.6 700.7,405.8 702.1,405.0 703.4,404.2 704.8,403.4 706.2,402.7 707.6,401.9 709.0,401.1 710.4,400.3 711.7,399.5 713.1,398.7 714.5,397.9 715.9,397.1 717.3,396.3 718.7,395.5 720.0,394.7 721.4,393.9 722.8,393.1 724.2,392.3 725.6,391.5 726.9,390.7 728.3,389.9 729.7,389.1 731.1,388.4 732.5,387.6 733.9,386.8 735.2,386.0 736.6,385.3 738.0,384.5 739.4,383.7 740.8,383.0 742.2,382.2 743.5,381.5 744.9,380.7 746.3,380.0 747.7,379.3 749.1,378.6 750.5,377.8 751.8,377.1 753.2,376.4 754.6,375.7 756.0,375.0 757.4,374.4 758.8,373.7 760.1,373.0 761.5,372.4 762.9,371.7 764.3,371.1 765.7,370.4 767.1,369.8 768.4,369.2 769.8,368.6 771.2,368.0 772.6,367.4 774.0,366.9 775.4,366.3 776.7,365.8 778.1,365.2 779.5,364.7 780.9,364.2 782.3,363.7 783.6,363.2 785.0,362.7 786.4,362.2 787.8,361.8 789.2,361.3 790.6,360.9 791.9,360.4 793.3,360.0 794.7,359.6 796.1,359.3 797.5,358.9 798.9,358.5 800.2,358.2 801.6,357.8 803.0,357.5 804.4,357.2 805.8,356.9 807.2,356.6 808.5,356.4 809.9,356.1 811.3,355.9 812.7,355.7 814.1,355.5 815.5,355.3 816.8,355.1 818.2,354.9 819.6,354.8 821.0,354.6 822.4,354.5 823.8,354.4 825.1,354.3 826.5,354.2 827.9,354.2 829.3,354.1 830.7,354.1 832.0,354.1 833.4,354.1 834.8,354.1 836.2,354.1 837.6,354.2 839.0,354.2 840.3,354.3 841.7,354.4 843.1,354.5 844.5,354.6 845.9,354.8 847.3,354.9 848.6,355.1 850.0,355.3 851.4,355.5 852.8,355.7 854.2,356.0 855.6,356.2 856.9,356.5 858.3,356.8 859.7,357.1 861.1,357.4 862.5,357.7 863.9,358.1 865.2,358.5 866.6,358.8 868.0,359.2 869.4,359.7 870.8,360.1 872.2,360.5 873.5,361.0 874.9,361.5 876.3,362.0 877.7,362.5 879.1,363.0 880.5,363.6 881.8,364.2 883.2,364.7 884.6,365.3 886.0,366.0 887.4,366.6 888.7,367.2 890.1,367.9 891.5,368.6 892.9,369.3 894.3,370.0 895.7,370.7 897.0,371.5 898.4,372.2 899.8,373.0 901.2,373.8 902.6,374.6 904.0,375.4 905.3,376.3 906.7,377.1 908.1,378.0 909.5,378.9 910.9,379.8 912.3,380.7 913.6,381.7 915.0,382.6 916.4,383.6 917.8,384.6 919.2,385.6 920.6,386.6 921.9,387.6 923.3,388.6 924.7,389.7 926.1,390.8 927.5,391.9 928.9,393.0 930.2,394.1 931.6,395.2 933.0,396.4 934.4,397.5 935.8,398.7 937.1,399.9 938.5,401.1 939.9,402.3 941.3,403.6 942.7,404.8 944.1,406.1 945.4,407.4 946.8,408.7 948.2,410.0 949.6,411.3 951.0,412.7 952.4,414.0 953.7,415.4 955.1,416.8 956.5,418.2 957.9,419.6 959.3,421.0 960.7,422.5 962.0,423.9 963.4,425.4 964.8,426.9 966.2,428.4 967.6,429.9 969.0,431.4 970.3,433.0 971.7,434.5 973.1,436.1 974.5,437.7 975.9,439.3 977.3,440.9 978.6,442.6 980.0,444.2 981.4,445.9 982.8,447.6 984.2,449.3 985.5,451.0 986.9,452.7 988.3,454.4 989.7,456.2 991.1,457.9 992.5,459.7 993.8,461.5 995.2,463.3 996.6,465.1 998.0,467.0 999.4,468.8 1000.8,470.7 1002.1,472.6 1003.5,474.5 1004.9,476.4 1006.3,478.3 1007.7,480.2 1009.1,482.2 1010.4,484.1 1011.8,486.1 1013.2,488.1 1014.6,490.1 1016.0,492.1 1017.4,494.1 1018.7,496.2 1020.1,498.2 1021.5,500.3 1022.9,502.3 1024.3,504.4 1025.7,506.5 1027.0,508.6 1028.4,510.8 1029.8,512.9 1031.2,515.1 1032.6,517.2 1034.0,519.4 1035.3,521.6 1036.7,523.8 1038.1,526.0 1039.5,528.2 1040.9,530.5 1042.2,532.7 1043.6,535.0 1045.0,537.2 1046.4,539.5 1047.8,541.8" fill="none" stroke="#2C2CFF" stroke-width="1.0" stroke-linejoin="round" shape-rendering="crispEdges"/>
<polyline clip-path="url(#pc)" points="81.1,550.0 82.5,547.5 83.9,545.1 85.3,542.6 86.7,540.1 88.1,537.7 89.4,535.2 90.8,532.8 92.2,530.4 93.6,528.0 95.0,525.6 96.4,523.2 97.7,520.9 99.1,518.5 100.5,516.2 101.9,513.9 103.3,511.6 104.6,509.3 106.0,507.0 107.4,504.7 108.8,502.5 110.2,500.2 111.6,498.0 112.9,495.8 114.3,493.6 115.7,491.4 117.1,489.2 118.5,487.1 119.9,484.9 121.2,482.8 122.6,480.7 124.0,478.5 125.4,476.5 126.8,474.4 128.2,472.3 129.5,470.3 130.9,468.2 132.3,466.2 133.7,464.2 135.1,462.2 136.5,460.2 137.8,458.3 139.2,456.3 140.6,454.4 142.0,452.4 143.4,450.5 144.8,448.6 146.1,446.8 147.5,444.9 148.9,443.0 150.3,441.2 151.7,439.4 153.1,437.6 154.4,435.8 155.8,434.0 157.2,432.2 158.6,430.5 160.0,428.7 161.3,427.0 162.7,425.3 164.1,423.6 165.5,422.0 166.9,420.3 168.3,418.6 169.6,417.0 171.0,415.4 172.4,413.8 173.8,412.2 175.2,410.6 176.6,409.1 177.9,407.5 179.3,406.0 180.7,404.5 182.1,403.0 183.5,401.5 184.9,400.1 186.2,398.6 187.6,397.2 189.0,395.8 190.4,394.4 191.8,393.0 193.2,391.6 194.5,390.3 195.9,388.9 197.3,387.6 198.7,386.3 200.1,385.0 201.5,383.7 202.8,382.5 204.2,381.2 205.6,380.0 207.0,378.8 208.4,377.6 209.7,376.5 211.1,375.3 212.5,374.2 213.9,373.0 215.3,371.9 216.7,370.9 218.0,369.8 219.4,368.7 220.8,367.7 222.2,366.7 223.6,365.7 225.0,364.7 226.3,363.7 227.7,362.8 229.1,361.8 230.5,360.9 231.9,360.0 233.3,359.1 234.6,358.3 236.0,357.4 237.4,356.6 238.8,355.8 240.2,355.0 241.6,354.2 242.9,353.5 244.3,352.7 245.7,352.0 247.1,351.3 248.5,350.6 249.9,350.0 251.2,349.3 252.6,348.7 254.0,348.1 255.4,347.5 256.8,346.9 258.1,346.3 259.5,345.8 260.9,345.2 262.3,344.7 263.7,344.2 265.1,343.8 266.4,343.3 267.8,342.9 269.2,342.4 270.6,342.0 272.0,341.7 273.4,341.3 274.7,340.9 276.1,340.6 277.5,340.3 278.9,340.0 280.3,339.7 281.7,339.5 283.0,339.2 284.4,339.0 285.8,338.8 287.2,338.6 288.6,338.4 290.0,338.3 291.3,338.1 292.7,338.0 294.1,337.9 295.5,337.8 296.9,337.7 298.3,337.7 299.6,337.7 301.0,337.6 302.4,337.6 303.8,337.7 305.2,337.7 306.6,337.8 307.9,337.8 309.3,337.9 310.7,338.0 312.1,338.2 313.5,338.3 314.8,338.5 316.2,338.7 317.6,338.9 319.0,339.1 320.4,339.3 321.8,339.6 323.1,339.8 324.5,340.1 325.9,340.4 327.3,340.7 328.7,341.1 330.1,341.4 331.4,341.8 332.8,342.2 334.2,342.6 335.6,343.0 337.0,343.5 338.4,343.9 339.7,344.4 341.1,344.9 342.5,345.4 343.9,346.0 345.3,346.5 346.7,347.1 348.0,347.7 349.4,348.3 350.8,348.9 352.2,349.5 353.6,350.2 355.0,350.9 356.3,351.6 357.7,352.3 359.1,353.0 360.5,353.7 361.9,354.5 363.2,355.3 364.6,356.1 366.0,356.9 367.4,357.7 368.8,358.5 370.2,359.4 371.5,360.3 372.9,361.2 374.3,362.1 375.7,363.0 377.1,364.0 378.5,364.9 379.8,365.9 381.2,366.9 382.6,367.9 384.0,368.9 385.4,370.0 386.8,371.0 388.1,372.1 389.5,373.2 390.9,374.3 392.3,375.4 393.7,376.5 395.1,377.7 396.4,378.8 397.8,380.0 399.2,381.2 400.6,382.4 402.0,383.6 403.4,384.8 404.7,386.0 406.1,387.2 407.5,388.5 408.9,389.8 410.3,391.0 411.7,392.3 413.0,393.6 414.4,394.9 415.8,396.2 417.2,397.5 418.6,398.8 419.9,400.1 421.3,401.5 422.7,402.8 424.1,404.1 425.5,405.5 426.9,406.8 428.2,408.2 429.6,409.5 431.0,410.8 432.4,412.2 433.8,413.5 435.2,414.9 436.5,416.2 437.9,417.6 439.3,418.9 440.7,420.2 442.1,421.5 443.5,422.9 444.8,424.2 446.2,425.5 447.6,426.8 449.0,428.0 450.4,429.3 451.8,430.6 453.1,431.8 454.5,433.1 455.9,434.3 457.3,435.5 458.7,436.7 460.1,437.9 461.4,439.0 462.8,440.2 464.2,441.3 465.6,442.4 467.0,443.5 468.3,444.6 469.7,445.6 471.1,446.6 472.5,447.6 473.9,448.6 475.3,449.6 476.6,450.5 478.0,451.4 479.4,452.3 480.8,453.1 482.2,454.0 483.6,454.8 484.9,455.6 486.3,456.3 487.7,457.0 489.1,457.7 490.5,458.4 491.9,459.0 493.2,459.6 494.6,460.2 496.0,460.8 497.4,461.3 498.8,461.8 500.2,462.3 501.5,462.7 502.9,463.2 504.3,463.6 505.7,463.9 507.1,464.3 508.5,464.6 509.8,464.9 511.2,465.1 512.6,465.4 514.0,465.6 515.4,465.8 516.8,465.9 518.1,466.1 519.5,466.2 520.9,466.3 522.3,466.4 523.7,466.4 525.0,466.5 526.4,466.5 527.8,466.5 529.2,466.4 530.6,466.4 532.0,466.3 533.3,466.3 534.7,466.2 536.1,466.1 537.5,466.0 538.9,465.8 540.3,465.7 541.6,465.5 543.0,465.4 544.4,465.2 545.8,465.0 547.2,464.8 548.6,464.6 549.9,464.4 551.3,464.2 552.7,463.9 554.1,463.7 555.5,463.5 556.9,463.2 558.2,463.0 559.6,462.7 561.0,462.4 562.4,462.2 563.8,461.9 565.2,461.6 566.5,461.3 567.9,461.1 569.3,460.8 570.7,460.5 572.1,460.2 573.4,459.9 574.8,459.6 576.2,459.3 577.6,459.0 579.0,458.7 580.4,458.4 581.7,458.1 583.1,457.8 584.5,457.5 585.9,457.2 587.3,456.9 588.7,456.6 590.0,456.3 591.4,456.0 592.8,455.7 594.2,455.4 595.6,455.0 597.0,454.7 598.3,454.4 599.7,454.1 601.1,453.8 602.5,453.5 603.9,453.1 605.3,452.8 606.6,452.5 608.0,452.2 609.4,451.8 610.8,451.5 612.2,451.1 613.6,450.8 614.9,450.4 616.3,450.1 617.7,449.7 619.1,449.4 620.5,449.0 621.8,448.6 623.2,448.2 624.6,447.8 626.0,447.4 627.4,447.0 628.8,446.6 630.1,446.2 631.5,445.7 632.9,445.3 634.3,444.8 635.7,444.4 637.1,443.9 638.4,443.4 639.8,442.9 641.2,442.4 642.6,441.9 644.0,441.4 645.4,440.8 646.7,440.3 648.1,439.7 649.5,439.1 650.9,438.5 652.3,437.9 653.7,437.3 655.0,436.7 656.4,436.1 657.8,435.4 659.2,434.8 660.6,434.1 662.0,433.4 663.3,432.7 664.7,432.0 666.1,431.3 667.5,430.6 668.9,429.8 670.3,429.1 671.6,428.3 673.0,427.5 674.4,426.7 675.8,425.9 677.2,425.1 678.5,424.3 679.9,423.4 681.3,422.6 682.7,421.7 684.1,420.9 685.5,420.0 686.8,419.1 688.2,418.2 689.6,417.3 691.0,416.4 692.4,415.4 693.8,414.5 695.1,413.6 696.5,412.6 697.9,411.7 699.3,410.7 700.7,409.7 702.1,408.7 703.4,407.8 704.8,406.8 706.2,405.8 707.6,404.8 709.0,403.8 710.4,402.8 711.7,401.8 713.1,400.8 714.5,399.7 715.9,398.7 717.3,397.7 718.7,396.7 720.0,395.7 721.4,394.6 722.8,393.6 724.2,392.6 725.6,391.6 726.9,390.6 728.3,389.5 729.7,388.5 731.1,387.5 732.5,386.5 733.9,385.5 735.2,384.5 736.6,383.5 738.0,382.5 739.4,381.5 740.8,380.5 742.2,379.6 743.5,378.6 744.9,377.6 746.3,376.7 747.7,375.7 749.1,374.8 750.5,373.9 751.8,372.9 753.2,372.0 754.6,371.1 756.0,370.2 757.4,369.3 758.8,368.5 760.1,367.6 761.5,366.7 762.9,365.9 764.3,365.1 765.7,364.2 767.1,363.4 768.4,362.6 769.8,361.9 771.2,361.1 772.6,360.3 774.0,359.6 775.4,358.9 776.7,358.2 778.1,357.4 779.5,356.8 780.9,356.1 782.3,355.4 783.6,354.8 785.0,354.2 786.4,353.5 787.8,352.9 789.2,352.4 790.6,351.8 791.9,351.2 793.3,350.7 794.7,350.2 796.1,349.7 797.5,349.2 798.9,348.7 800.2,348.2 801.6,347.8 803.0,347.4 804.4,347.0 805.8,346.6 807.2,346.2 808.5,345.8 809.9,345.5 811.3,345.2 812.7,344.8 814.1,344.6 815.5,344.3 816.8,344.0 818.2,343.8 819.6,343.6 821.0,343.3 822.4,343.2 823.8,343.0 825.1,342.8 826.5,342.7 827.9,342.6 829.3,342.5 830.7,342.4 832.0,342.3 833.4,342.3 834.8,342.3 836.2,342.3 837.6,342.3 839.0,342.3 840.3,342.3 841.7,342.4 843.1,342.5 844.5,342.6 845.9,342.7 847.3,342.8 848.6,343.0 850.0,343.1 851.4,343.3 852.8,343.5 854.2,343.7 855.6,344.0 856.9,344.2 858.3,344.5 859.7,344.8 861.1,345.1 862.5,345.5 863.9,345.8 865.2,346.2 866.6,346.6 868.0,347.0 869.4,347.4 870.8,347.8 872.2,348.3 873.5,348.8 874.9,349.2 876.3,349.8 877.7,350.3 879.1,350.8 880.5,351.4 881.8,352.0 883.2,352.6 884.6,353.2 886.0,353.8 887.4,354.5 888.7,355.1 890.1,355.8 891.5,356.5 892.9,357.3 894.3,358.0 895.7,358.8 897.0,359.5 898.4,360.3 899.8,361.1 901.2,361.9 902.6,362.8 904.0,363.6 905.3,364.5 906.7,365.4 908.1,366.3 909.5,367.2 910.9,368.2 912.3,369.1 913.6,370.1 915.0,371.1 916.4,372.1 917.8,373.1 919.2,374.1 920.6,375.2 921.9,376.3 923.3,377.3 924.7,378.4 926.1,379.6 927.5,380.7 928.9,381.8 930.2,383.0 931.6,384.2 933.0,385.4 934.4,386.6 935.8,387.8 937.1,389.0 938.5,390.3 939.9,391.5 941.3,392.8 942.7,394.1 944.1,395.4 945.4,396.7 946.8,398.0 948.2,399.4 949.6,400.8 951.0,402.1 952.4,403.5 953.7,404.9 955.1,406.4 956.5,407.8 957.9,409.2 959.3,410.7 960.7,412.2 962.0,413.7 963.4,415.2 964.8,416.7 966.2,418.2 967.6,419.8 969.0,421.3 970.3,422.9 971.7,424.5 973.1,426.1 974.5,427.7 975.9,429.4 977.3,431.0 978.6,432.7 980.0,434.3 981.4,436.0 982.8,437.7 984.2,439.5 985.5,441.2 986.9,443.0 988.3,444.7 989.7,446.5 991.1,448.3 992.5,450.1 993.8,451.9 995.2,453.8 996.6,455.6 998.0,457.5 999.4,459.4 1000.8,461.3 1002.1,463.2 1003.5,465.1 1004.9,467.1 1006.3,469.0 1007.7,471.0 1009.1,473.0 1010.4,475.0 1011.8,477.0 1013.2,479.0 1014.6,481.1 1016.0,483.1 1017.4,485.2 1018.7,487.3 1020.1,489.4 1021.5,491.5 1022.9,493.6 1024.3,495.8 1025.7,497.9 1027.0,500.1 1028.4,502.3 1029.8,504.5 1031.2,506.7 1032.6,508.9 1034.0,511.2 1035.3,513.4 1036.7,515.7 1038.1,517.9 1039.5,520.2 1040.9,522.5 1042.2,524.8 1043.6,527.2 1045.0,529.5 1046.4,531.8 1047.8,534.2" fill="none" stroke="#0000F0" stroke-width="1.0" stroke-linejoin="round" shape-rendering="crispEdges"/>
<polyline clip-path="url(#pc)" points="81.1,545.7 82.5,543.2 83.9,540.6 85.3,538.1 86.7,535.6 88.1,533.1 89.4,530.6 90.8,528.2 92.2,525.7 93.6,523.3 95.0,520.9 96.4,518.5 97.7,516.0 99.1,513.7 100.5,511.3 101.9,508.9 103.3,506.6 104.6,504.2 106.0,501.9 107.4,499.6 108.8,497.3 110.2,495.0 111.6,492.8 112.9,490.5 114.3,488.3 115.7,486.0 117.1,483.8 118.5,481.6 119.9,479.4 121.2,477.2 122.6,475.1 124.0,472.9 125.4,470.8 126.8,468.7 128.2,466.6 129.5,464.5 130.9,462.4 132.3,460.3 133.7,458.3 135.1,456.3 136.5,454.2 137.8,452.2 139.2,450.3 140.6,448.3 142.0,446.3 143.4,444.4 144.8,442.4 146.1,440.5 147.5,438.6 148.9,436.7 150.3,434.9 151.7,433.0 153.1,431.2 154.4,429.3 155.8,427.5 157.2,425.7 158.6,424.0 160.0,422.2 161.3,420.4 162.7,418.7 164.1,417.0 165.5,415.3 166.9,413.6 168.3,411.9 169.6,410.3 171.0,408.6 172.4,407.0 173.8,405.4 175.2,403.8 176.6,402.2 177.9,400.7 179.3,399.1 180.7,397.6 182.1,396.1 183.5,394.6 184.9,393.1 186.2,391.7 187.6,390.2 189.0,388.8 190.4,387.4 191.8,386.0 193.2,384.6 194.5,383.2 195.9,381.9 197.3,380.6 198.7,379.3 200.1,378.0 201.5,376.7 202.8,375.4 204.2,374.2 205.6,372.9 207.0,371.7 208.4,370.5 209.7,369.4 211.1,368.2 212.5,367.1 213.9,365.9 215.3,364.8 216.7,363.7 218.0,362.6 219.4,361.6 220.8,360.5 222.2,359.5 223.6,358.5 225.0,357.5 226.3,356.5 227.7,355.6 229.1,354.6 230.5,353.7 231.9,352.8 233.3,351.9 234.6,351.1 236.0,350.2 237.4,349.4 238.8,348.5 240.2,347.7 241.6,347.0 242.9,346.2 244.3,345.4 245.7,344.7 247.1,344.0 248.5,343.3 249.9,342.6 251.2,341.9 252.6,341.3 254.0,340.7 255.4,340.1 256.8,339.5 258.1,338.9 259.5,338.3 260.9,337.8 262.3,337.3 263.7,336.8 265.1,336.3 266.4,335.8 267.8,335.4 269.2,334.9 270.6,334.5 272.0,334.1 273.4,333.7 274.7,333.4 276.1,333.0 277.5,332.7 278.9,332.4 280.3,332.1 281.7,331.8 283.0,331.5 284.4,331.3 285.8,331.1 287.2,330.9 288.6,330.7 290.0,330.5 291.3,330.4 292.7,330.2 294.1,330.1 295.5,330.0 296.9,329.9 298.3,329.9 299.6,329.8 301.0,329.8 302.4,329.8 303.8,329.8 305.2,329.8 306.6,329.9 307.9,329.9 309.3,330.0 310.7,330.1 312.1,330.2 313.5,330.4 314.8,330.5 316.2,330.7 317.6,330.9 319.0,331.1 320.4,331.3 321.8,331.6 323.1,331.8 324.5,332.1 325.9,332.4 327.3,332.7 328.7,333.0 330.1,333.4 331.4,333.8 332.8,334.1 334.2,334.6 335.6,335.0 337.0,335.4 338.4,335.9 339.7,336.3 341.1,336.8 342.5,337.4 343.9,337.9 345.3,338.4 346.7,339.0 348.0,339.6 349.4,340.2 350.8,340.8 352.2,341.4 353.6,342.1 355.0,342.8 356.3,343.5 357.7,344.2 359.1,344.9 360.5,345.6 361.9,346.4 363.2,347.2 364.6,348.0 366.0,348.8 367.4,349.7 368.8,350.5 370.2,351.4 371.5,352.3 372.9,353.2 374.3,354.1 375.7,355.1 377.1,356.0 378.5,357.0 379.8,358.0 381.2,359.0 382.6,360.1 384.0,361.1 385.4,362.2 386.8,363.3 388.1,364.4 389.5,365.6 390.9,366.7 392.3,367.9 393.7,369.0 395.1,370.3 396.4,371.5 397.8,372.7 399.2,374.0 400.6,375.2 402.0,376.5 403.4,377.8 404.7,379.1 406.1,380.5 407.5,381.8 408.9,383.2 410.3,384.6 411.7,386.0 413.0,387.4 414.4,388.8 415.8,390.3 417.2,391.7 418.6,393.2 419.9,394.7 421.3,396.2 422.7,397.7 424.1,399.2 425.5,400.7 426.9,402.3 428.2,403.8 429.6,405.4 431.0,406.9 432.4,408.5 433.8,410.1 435.2,411.7 436.5,413.2 437.9,414.8 439.3,416.4 440.7,418.0 442.1,419.6 443.5,421.2 444.8,422.8 446.2,424.3 447.6,425.9 449.0,427.5 450.4,429.0 451.8,430.6 453.1,432.1 454.5,433.7 455.9,435.2 457.3,436.7 458.7,438.1 460.1,439.6 461.4,441.0 462.8,442.4 464.2,443.8 465.6,445.2 467.0,446.5 468.3,447.8 469.7,449.1 471.1,450.3 472.5,451.5 473.9,452.7 475.3,453.8 476.6,454.9 478.0,456.0 479.4,457.0 480.8,458.0 482.2,458.9 483.6,459.8 484.9,460.7 486.3,461.5 487.7,462.2 489.1,463.0 490.5,463.6 491.9,464.3 493.2,464.8 494.6,465.4 496.0,465.9 497.4,466.3 498.8,466.7 500.2,467.1 501.5,467.4 502.9,467.7 504.3,467.9 505.7,468.1 507.1,468.3 508.5,468.4 509.8,468.5 511.2,468.5 512.6,468.5 514.0,468.5 515.4,468.4 516.8,468.3 518.1,468.2 519.5,468.1 520.9,467.9 522.3,467.7 523.7,467.5 525.0,467.3 526.4,467.0 527.8,466.7 529.2,466.4 530.6,466.2 532.0,465.8 533.3,465.5 534.7,465.2 536.1,464.8 537.5,464.5 538.9,464.2 540.3,463.8 541.6,463.4 543.0,463.1 544.4,462.7 545.8,462.4 547.2,462.0 548.6,461.7 549.9,461.3 551.3,461.0 552.7,460.6 554.1,460.3 555.5,460.0 556.9,459.7 558.2,459.4 559.6,459.1 561.0,458.8 562.4,458.5 563.8,458.2 565.2,457.9 566.5,457.7 567.9,457.4 569.3,457.2 570.7,457.0 572.1,456.7 573.4,456.5 574.8,456.3 576.2,456.1 577.6,455.9 579.0,455.8 580.4,455.6 581.7,455.4 583.1,455.3 584.5,455.1 585.9,455.0 587.3,454.9 588.7,454.8 590.0,454.6 591.4,454.5 592.8,454.4 594.2,454.3 595.6,454.3 597.0,454.2 598.3,454.1 599.7,454.0 601.1,454.0 602.5,453.9 603.9,453.8 605.3,453.8 606.6,453.7 608.0,453.6 609.4,453.6 610.8,453.5 612.2,453.4 613.6,453.4 614.9,453.3 616.3,453.2 617.7,453.1 619.1,453.0 620.5,452.9 621.8,452.8 623.2,452.7 624.6,452.6 626.0,452.4 627.4,452.3 628.8,452.1 630.1,451.9 631.5,451.7 632.9,451.5 634.3,451.3 635.7,451.0 637.1,450.7 638.4,450.5 639.8,450.2 641.2,449.8 642.6,449.5 644.0,449.1 645.4,448.7 646.7,448.3 648.1,447.9 649.5,447.4 650.9,446.9 652.3,446.4 653.7,445.9 655.0,445.3 656.4,444.8 657.8,444.1 659.2,443.5 660.6,442.9 662.0,442.2 663.3,441.5 664.7,440.7 666.1,440.0 667.5,439.2 668.9,438.4 670.3,437.6 671.6,436.7 673.0,435.8 674.4,434.9 675.8,434.0 677.2,433.0 678.5,432.1 679.9,431.1 681.3,430.1 682.7,429.0 684.1,428.0 685.5,426.9 686.8,425.8 688.2,424.7 689.6,423.5 691.0,422.4 692.4,421.2 693.8,420.0 695.1,418.8 696.5,417.6 697.9,416.4 699.3,415.2 700.7,413.9 702.1,412.7 703.4,411.4 704.8,410.1 706.2,408.8 707.6,407.5 709.0,406.2 710.4,404.9 711.7,403.6 713.1,402.3 714.5,401.0 715.9,399.7 717.3,398.4 718.7,397.1 720.0,395.7 721.4,394.4 722.8,393.1 724.2,391.8 725.6,390.5 726.9,389.2 728.3,387.9 729.7,386.6 731.1,385.3 732.5,384.0 733.9,382.8 735.2,381.5 736.6,380.2 738.0,379.0 739.4,377.8 740.8,376.5 742.2,375.3 743.5,374.1 744.9,373.0 746.3,371.8 747.7,370.6 749.1,369.5 750.5,368.3 751.8,367.2 753.2,366.1 754.6,365.0 756.0,364.0 757.4,362.9 758.8,361.9 760.1,360.9 761.5,359.9 762.9,358.9 764.3,357.9 765.7,357.0 767.1,356.0 768.4,355.1 769.8,354.2 771.2,353.3 772.6,352.5 774.0,351.6 775.4,350.8 776.7,350.0 778.1,349.2 779.5,348.4 780.9,347.7 782.3,347.0 783.6,346.3 785.0,345.6 786.4,344.9 787.8,344.2 789.2,343.6 790.6,343.0 791.9,342.4 793.3,341.8 794.7,341.3 796.1,340.7 797.5,340.2 798.9,339.7 800.2,339.2 801.6,338.8 803.0,338.3 804.4,337.9 805.8,337.5 807.2,337.1 808.5,336.7 809.9,336.4 811.3,336.0 812.7,335.7 814.1,335.4 815.5,335.1 816.8,334.9 818.2,334.6 819.6,334.4 821.0,334.2 822.4,334.0 823.8,333.8 825.1,333.7 826.5,333.5 827.9,333.4 829.3,333.3 830.7,333.2 832.0,333.1 833.4,333.1 834.8,333.1 836.2,333.1 837.6,333.1 839.0,333.1 840.3,333.1 841.7,333.2 843.1,333.3 844.5,333.4 845.9,333.5 847.3,333.6 848.6,333.8 850.0,334.0 851.4,334.2 852.8,334.4 854.2,334.6 855.6,334.8 856.9,335.1 858.3,335.4 859.7,335.7 861.1,336.0 862.5,336.3 863.9,336.7 865.2,337.1 866.6,337.5 868.0,337.9 869.4,338.3 870.8,338.7 872.2,339.2 873.5,339.7 874.9,340.2 876.3,340.7 877.7,341.2 879.1,341.8 880.5,342.4 881.8,343.0 883.2,343.6 884.6,344.2 886.0,344.8 887.4,345.5 888.7,346.2 890.1,346.9 891.5,347.6 892.9,348.3 894.3,349.1 895.7,349.9 897.0,350.7 898.4,351.5 899.8,352.3 901.2,353.1 902.6,354.0 904.0,354.9 905.3,355.8 906.7,356.7 908.1,357.6 909.5,358.5 910.9,359.5 912.3,360.5 913.6,361.5 915.0,362.5 916.4,363.5 917.8,364.6 919.2,365.6 920.6,366.7 921.9,367.8 923.3,368.9 924.7,370.0 926.1,371.2 927.5,372.3 928.9,373.5 930.2,374.7 931.6,375.9 933.0,377.1 934.4,378.3 935.8,379.6 937.1,380.8 938.5,382.1 939.9,383.4 941.3,384.7 942.7,386.0 944.1,387.4 945.4,388.7 946.8,390.1 948.2,391.5 949.6,392.9 951.0,394.3 952.4,395.7 953.7,397.2 955.1,398.6 956.5,400.1 957.9,401.6 959.3,403.1 960.7,404.6 962.0,406.1 963.4,407.7 964.8,409.2 966.2,410.8 967.6,412.4 969.0,414.0 970.3,415.6 971.7,417.2 973.1,418.8 974.5,420.5 975.9,422.2 977.3,423.8 978.6,425.5 980.0,427.2 981.4,429.0 982.8,430.7 984.2,432.5 985.5,434.2 986.9,436.0 988.3,437.8 989.7,439.6 991.1,441.4 992.5,443.3 993.8,445.1 995.2,447.0 996.6,448.9 998.0,450.8 999.4,452.7 1000.8,454.6 1002.1,456.6 1003.5,458.5 1004.9,460.5 1006.3,462.5 1007.7,464.5 1009.1,466.5 1010.4,468.5 1011.8,470.6 1013.2,472.6 1014.6,474.7 1016.0,476.8 1017.4,478.9 1018.7,481.0 1020.1,483.1 1021.5,485.2 1022.9,487.4 1024.3,489.5 1025.7,491.7 1027.0,493.9 1028.4,496.1 1029.8,498.3 1031.2,500.6 1032.6,502.8 1034.0,505.1 1035.3,507.3 1036.7,509.6 1038.1,511.9 1039.5,514.2 1040.9,516.5 1042.2,518.9 1043.6,521.2 1045.0,523.5 1046.4,525.9 1047.8,528.3" fill="none" stroke="#000098" stroke-width="1.0" stroke-linejoin="round" shape-rendering="crispEdges"/>
<polyline clip-path="url(#pc)" points="81.1,542.9 82.5,540.3 83.9,537.7 85.3,535.2 86.7,532.6 88.1,530.1 89.4,527.6 90.8,525.0 92.2,522.5 93.6,520.1 95.0,517.6 96.4,515.1 97.7,512.7 99.1,510.2 100.5,507.8 101.9,505.4 103.3,503.0 104.6,500.6 106.0,498.2 107.4,495.9 108.8,493.5 110.2,491.2 111.6,488.9 112.9,486.5 114.3,484.2 115.7,482.0 117.1,479.7 118.5,477.4 119.9,475.2 121.2,473.0 122.6,470.7 124.0,468.5 125.4,466.3 126.8,464.2 128.2,462.0 129.5,459.9 130.9,457.7 132.3,455.6 133.7,453.5 135.1,451.4 136.5,449.3 137.8,447.3 139.2,445.2 140.6,443.2 142.0,441.1 143.4,439.1 144.8,437.1 146.1,435.2 147.5,433.2 148.9,431.3 150.3,429.3 151.7,427.4 153.1,425.5 154.4,423.6 155.8,421.7 157.2,419.9 158.6,418.0 160.0,416.2 161.3,414.4 162.7,412.6 164.1,410.8 165.5,409.0 166.9,407.3 168.3,405.6 169.6,403.8 171.0,402.1 172.4,400.4 173.8,398.8 175.2,397.1 176.6,395.5 177.9,393.8 179.3,392.2 180.7,390.6 182.1,389.1 183.5,387.5 184.9,386.0 186.2,384.5 187.6,382.9 189.0,381.5 190.4,380.0 191.8,378.5 193.2,377.1 194.5,375.7 195.9,374.3 197.3,372.9 198.7,371.5 200.1,370.2 201.5,368.8 202.8,367.5 204.2,366.2 205.6,365.0 207.0,363.7 208.4,362.5 209.7,361.2 211.1,360.0 212.5,358.8 213.9,357.7 215.3,356.5 216.7,355.4 218.0,354.3 219.4,353.2 220.8,352.1 222.2,351.0 223.6,350.0 225.0,349.0 226.3,347.9 227.7,347.0 229.1,346.0 230.5,345.0 231.9,344.1 233.3,343.2 234.6,342.3 236.0,341.4 237.4,340.5 238.8,339.7 240.2,338.8 241.6,338.0 242.9,337.2 244.3,336.5 245.7,335.7 247.1,335.0 248.5,334.2 249.9,333.5 251.2,332.9 252.6,332.2 254.0,331.5 255.4,330.9 256.8,330.3 258.1,329.7 259.5,329.1 260.9,328.5 262.3,328.0 263.7,327.5 265.1,326.9 266.4,326.5 267.8,326.0 269.2,325.5 270.6,325.1 272.0,324.7 273.4,324.3 274.7,323.9 276.1,323.5 277.5,323.2 278.9,322.8 280.3,322.5 281.7,322.2 283.0,321.9 284.4,321.7 285.8,321.4 287.2,321.2 288.6,321.0 290.0,320.8 291.3,320.7 292.7,320.5 294.1,320.4 295.5,320.3 296.9,320.2 298.3,320.1 299.6,320.0 301.0,320.0 302.4,320.0 303.8,320.0 305.2,320.0 306.6,320.0 307.9,320.1 309.3,320.1 310.7,320.2 312.1,320.3 313.5,320.5 314.8,320.6 316.2,320.8 317.6,321.0 319.0,321.2 320.4,321.4 321.8,321.6 323.1,321.9 324.5,322.2 325.9,322.5 327.3,322.8 328.7,323.1 330.1,323.5 331.4,323.9 332.8,324.3 334.2,324.7 335.6,325.1 337.0,325.6 338.4,326.0 339.7,326.5 341.1,327.0 342.5,327.6 343.9,328.1 345.3,328.7 346.7,329.3 348.0,329.9 349.4,330.5 350.8,331.1 352.2,331.8 353.6,332.5 355.0,333.2 356.3,333.9 357.7,334.6 359.1,335.4 360.5,336.1 361.9,336.9 363.2,337.7 364.6,338.6 366.0,339.4 367.4,340.3 368.8,341.2 370.2,342.1 371.5,343.0 372.9,343.9 374.3,344.9 375.7,345.8 377.1,346.8 378.5,347.8 379.8,348.9 381.2,349.9 382.6,351.0 384.0,352.1 385.4,353.2 386.8,354.3 388.1,355.4 389.5,356.6 390.9,357.7 392.3,358.9 393.7,360.1 395.1,361.4 396.4,362.6 397.8,363.9 399.2,365.1 400.6,366.4 402.0,367.7 403.4,369.1 404.7,370.4 406.1,371.8 407.5,373.2 408.9,374.6 410.3,376.0 411.7,377.4 413.0,378.9 414.4,380.4 415.8,381.9 417.2,383.4 418.6,384.9 419.9,386.4 421.3,388.0 422.7,389.6 424.1,391.2 425.5,392.8 426.9,394.4 428.2,396.1 429.6,397.8 431.0,399.5 432.4,401.2 433.8,402.9 435.2,404.6 436.5,406.4 437.9,408.2 439.3,410.0 440.7,411.8 442.1,413.6 443.5,415.5 444.8,417.4 446.2,419.2 447.6,421.1 449.0,423.1 450.4,425.0 451.8,427.0 453.1,429.0 454.5,431.0 455.9,433.0 457.3,435.0 458.7,437.1 460.1,439.1 461.4,441.2 462.8,443.3 464.2,445.5 465.6,447.6 467.0,449.8 468.3,452.0 469.7,454.2 471.1,456.4 472.5,458.6 473.9,460.9 475.3,463.2 476.6,465.4 478.0,467.7 479.4,470.1 480.8,472.4 482.2,474.6 483.6,476.8 484.9,478.9 486.3,480.7 487.7,482.3 489.1,483.6 490.5,484.4 491.9,484.9 493.2,484.9 494.6,484.6 496.0,484.0 497.4,483.2 498.8,482.2 500.2,481.2 501.5,480.2 502.9,479.1 504.3,478.1 505.7,477.1 507.1,476.1 508.5,475.1 509.8,474.1 511.2,473.1 512.6,472.2 514.0,471.3 515.4,470.3 516.8,469.5 518.1,468.6 519.5,467.7 520.9,466.9 522.3,466.1 523.7,465.3 525.0,464.5 526.4,463.8 527.8,463.0 529.2,462.3 530.6,461.6 532.0,460.9 533.3,460.3 534.7,459.6 536.1,459.0 537.5,458.4 538.9,457.8 540.3,457.2 541.6,456.7 543.0,456.1 544.4,455.6 545.8,455.1 547.2,454.7 548.6,454.2 549.9,453.8 551.3,453.3 552.7,452.9 554.1,452.6 555.5,452.2 556.9,451.8 558.2,451.5 559.6,451.2 561.0,450.9 562.4,450.7 563.8,450.4 565.2,450.2 566.5,450.0 567.9,449.8 569.3,449.6 570.7,449.4 572.1,449.3 573.4,449.2 574.8,449.1 576.2,449.0 577.6,448.9 579.0,448.9 580.4,448.9 581.7,448.9 583.1,448.9 584.5,448.9 585.9,448.9 587.3,449.0 588.7,449.1 590.0,449.2 591.4,449.3 592.8,449.5 594.2,449.6 595.6,449.8 597.0,450.0 598.3,450.2 599.7,450.5 601.1,450.7 602.5,451.0 603.9,451.3 605.3,451.6 606.6,452.0 608.0,452.3 609.4,452.7 610.8,453.1 612.2,453.5 613.6,453.9 614.9,454.4 616.3,454.8 617.7,455.3 619.1,455.8 620.5,456.4 621.8,456.9 623.2,457.5 624.6,458.1 626.0,458.7 627.4,459.3 628.8,460.0 630.1,460.6 631.5,461.3 632.9,462.0 634.3,462.7 635.7,463.5 637.1,464.3 638.4,465.0 639.8,465.9 641.2,466.7 642.6,467.5 644.0,468.4 645.4,469.3 646.7,470.1 648.1,471.0 649.5,471.9 650.9,472.8 652.3,473.6 653.7,474.3 655.0,475.0 656.4,475.4 657.8,475.8 659.2,475.8 660.6,475.7 662.0,475.2 663.3,474.5 664.7,473.4 666.1,472.1 667.5,470.6 668.9,468.8 670.3,466.9 671.6,464.8 673.0,462.6 674.4,460.4 675.8,458.1 677.2,455.8 678.5,453.5 679.9,451.2 681.3,448.9 682.7,446.6 684.1,444.4 685.5,442.1 686.8,439.9 688.2,437.7 689.6,435.6 691.0,433.4 692.4,431.3 693.8,429.1 695.1,427.0 696.5,425.0 697.9,422.9 699.3,420.9 700.7,418.9 702.1,416.9 703.4,414.9 704.8,413.0 706.2,411.0 707.6,409.1 709.0,407.2 710.4,405.4 711.7,403.5 713.1,401.7 714.5,399.9 715.9,398.1 717.3,396.3 718.7,394.6 720.0,392.9 721.4,391.2 722.8,389.5 724.2,387.8 725.6,386.2 726.9,384.6 728.3,383.0 729.7,381.4 731.1,379.8 732.5,378.3 733.9,376.8 735.2,375.3 736.6,373.8 738.0,372.4 739.4,370.9 740.8,369.5 742.2,368.1 743.5,366.8 744.9,365.4 746.3,364.1 747.7,362.8 749.1,361.5 750.5,360.2 751.8,359.0 753.2,357.8 754.6,356.6 756.0,355.4 757.4,354.2 758.8,353.1 760.1,352.0 761.5,350.9 762.9,349.8 764.3,348.8 765.7,347.7 767.1,346.7 768.4,345.7 769.8,344.8 771.2,343.8 772.6,342.9 774.0,342.0 775.4,341.1 776.7,340.2 778.1,339.4 779.5,338.6 780.9,337.8 782.3,337.0 783.6,336.3 785.0,335.5 786.4,334.8 787.8,334.1 789.2,333.4 790.6,332.8 791.9,332.2 793.3,331.5 794.7,331.0 796.1,330.4 797.5,329.8 798.9,329.3 800.2,328.8 801.6,328.3 803.0,327.8 804.4,327.4 805.8,327.0 807.2,326.6 808.5,326.2 809.9,325.8 811.3,325.5 812.7,325.1 814.1,324.8 815.5,324.5 816.8,324.3 818.2,324.0 819.6,323.8 821.0,323.6 822.4,323.4 823.8,323.2 825.1,323.0 826.5,322.9 827.9,322.8 829.3,322.7 830.7,322.6 832.0,322.6 833.4,322.5 834.8,322.5 836.2,322.5 837.6,322.5 839.0,322.6 840.3,322.6 841.7,322.7 843.1,322.8 844.5,322.9 845.9,323.1 847.3,323.2 848.6,323.4 850.0,323.6 851.4,323.8 852.8,324.0 854.2,324.3 855.6,324.5 856.9,324.8 858.3,325.1 859.7,325.4 861.1,325.8 862.5,326.1 863.9,326.5 865.2,326.9 866.6,327.3 868.0,327.8 869.4,328.2 870.8,328.7 872.2,329.2 873.5,329.7 874.9,330.2 876.3,330.8 877.7,331.4 879.1,331.9 880.5,332.5 881.8,333.2 883.2,333.8 884.6,334.5 886.0,335.1 887.4,335.8 888.7,336.5 890.1,337.3 891.5,338.0 892.9,338.8 894.3,339.6 895.7,340.4 897.0,341.2 898.4,342.0 899.8,342.9 901.2,343.8 902.6,344.7 904.0,345.6 905.3,346.5 906.7,347.4 908.1,348.4 909.5,349.4 910.9,350.4 912.3,351.4 913.6,352.4 915.0,353.4 916.4,354.5 917.8,355.6 919.2,356.7 920.6,357.8 921.9,358.9 923.3,360.0 924.7,361.2 926.1,362.4 927.5,363.5 928.9,364.7 930.2,366.0 931.6,367.2 933.0,368.4 934.4,369.7 935.8,371.0 937.1,372.3 938.5,373.6 939.9,374.9 941.3,376.3 942.7,377.6 944.1,379.0 945.4,380.4 946.8,381.8 948.2,383.2 949.6,384.6 951.0,386.1 952.4,387.5 953.7,389.0 955.1,390.5 956.5,392.0 957.9,393.5 959.3,395.0 960.7,396.6 962.0,398.1 963.4,399.7 964.8,401.3 966.2,402.9 967.6,404.5 969.0,406.1 970.3,407.8 971.7,409.4 973.1,411.1 974.5,412.8 975.9,414.5 977.3,416.2 978.6,417.9 980.0,419.6 981.4,421.4 982.8,423.2 984.2,424.9 985.5,426.7 986.9,428.6 988.3,430.4 989.7,432.2 991.1,434.1 992.5,435.9 993.8,437.8 995.2,439.7 996.6,441.6 998.0,443.5 999.4,445.5 1000.8,447.4 1002.1,449.4 1003.5,451.4 1004.9,453.4 1006.3,455.4 1007.7,457.4 1009.1,459.4 1010.4,461.5 1011.8,463.6 1013.2,465.6 1014.6,467.7 1016.0,469.8 1017.4,472.0 1018.7,474.1 1020.1,476.2 1021.5,478.4 1022.9,480.6 1024.3,482.8 1025.7,485.0 1027.0,487.2 1028.4,489.4 1029.8,491.7 1031.2,493.9 1032.6,496.2 1034.0,498.5 1035.3,500.7 1036.7,503.1 1038.1,505.4 1039.5,507.7 1040.9,510.0 1042.2,512.4 1043.6,514.8 1045.0,517.1 1046.4,519.5 1047.8,521.9" fill="none" stroke="#00008C" stroke-width="2.0" stroke-linejoin="round" shape-rendering="crispEdges"/>
<rect x="82" y="292" width="965" height="1" fill="#000"/>
<rect x="1046" y="292" width="1" height="279" fill="#000"/>
<rect x="82" y="292" width="2" height="279" fill="#000"/>
<rect x="82" y="569" width="965" height="2" fill="#000"/>
<rect x="79" y="565" width="3" height="1" fill="#606060"/>
<rect x="80" y="553" width="2" height="1" fill="#606060"/>
<rect x="80" y="541" width="2" height="1" fill="#606060"/>
<rect x="80" y="530" width="2" height="1" fill="#606060"/>
<rect x="79" y="518" width="3" height="1" fill="#606060"/>
<rect x="80" y="507" width="2" height="1" fill="#606060"/>
<rect x="80" y="495" width="2" height="1" fill="#606060"/>
<rect x="80" y="484" width="2" height="1" fill="#606060"/>
<rect x="79" y="472" width="3" height="1" fill="#606060"/>
<rect x="80" y="460" width="2" height="1" fill="#606060"/>
<rect x="80" y="449" width="2" height="1" fill="#606060"/>
<rect x="80" y="437" width="2" height="1" fill="#606060"/>
<rect x="79" y="426" width="3" height="1" fill="#606060"/>
<rect x="80" y="414" width="2" height="1" fill="#606060"/>
<rect x="80" y="403" width="2" height="1" fill="#606060"/>
<rect x="80" y="391" width="2" height="1" fill="#606060"/>
<rect x="79" y="380" width="3" height="1" fill="#606060"/>
<rect x="80" y="368" width="2" height="1" fill="#606060"/>
<rect x="80" y="356" width="2" height="1" fill="#606060"/>
<rect x="80" y="345" width="2" height="1" fill="#606060"/>
<rect x="79" y="334" width="3" height="1" fill="#606060"/>
<rect x="94" y="571" width="1" height="2" fill="#606060"/>
<rect x="112" y="571" width="1" height="2" fill="#606060"/>
<rect x="129" y="571" width="1" height="2" fill="#606060"/>
<rect x="146" y="571" width="1" height="4" fill="#606060"/>
<rect x="163" y="571" width="1" height="2" fill="#606060"/>
<rect x="180" y="571" width="1" height="2" fill="#606060"/>
<rect x="198" y="571" width="1" height="2" fill="#606060"/>
<rect x="215" y="571" width="1" height="2" fill="#606060"/>
<rect x="232" y="571" width="1" height="4" fill="#606060"/>
<rect x="249" y="571" width="1" height="2" fill="#606060"/>
<rect x="266" y="571" width="1" height="2" fill="#606060"/>
<rect x="284" y="571" width="1" height="2" fill="#606060"/>
<rect x="301" y="571" width="1" height="2" fill="#606060"/>
<rect x="318" y="571" width="1" height="4" fill="#606060"/>
<rect x="335" y="571" width="1" height="2" fill="#606060"/>
<rect x="352" y="571" width="1" height="2" fill="#606060"/>
<rect x="370" y="571" width="1" height="2" fill="#606060"/>
<rect x="387" y="571" width="1" height="2" fill="#606060"/>
<rect x="404" y="571" width="1" height="4" fill="#606060"/>
<rect x="421" y="571" width="1" height="2" fill="#606060"/>
<rect x="438" y="571" width="1" height="2" fill="#606060"/>
<rect x="456" y="571" width="1" height="2" fill="#606060"/>
<rect x="473" y="571" width="1" height="2" fill="#606060"/>
<rect x="490" y="571" width="1" height="4" fill="#606060"/>
<rect x="507" y="571" width="1" height="2" fill="#606060"/>
<rect x="524" y="571" width="1" height="2" fill="#606060"/>
<rect x="542" y="571" width="1" height="2" fill="#606060"/>
<rect x="559" y="571" width="1" height="2" fill="#606060"/>
<rect x="576" y="571" width="1" height="4" fill="#606060"/>
<rect x="593" y="571" width="1" height="2" fill="#606060"/>
<rect x="610" y="571" width="1" height="2" fill="#606060"/>
<rect x="628" y="571" width="1" height="2" fill="#606060"/>
<rect x="645" y="571" width="1" height="2" fill="#606060"/>
<rect x="662" y="571" width="1" height="4" fill="#606060"/>
<rect x="679" y="571" width="1" height="2" fill="#606060"/>
<rect x="696" y="571" width="1" height="2" fill="#606060"/>
<rect x="714" y="571" width="1" height="2" fill="#606060"/>
<rect x="731" y="571" width="1" height="2" fill="#606060"/>
<rect x="748" y="571" width="1" height="4" fill="#606060"/>
<rect x="765" y="571" width="1" height="2" fill="#606060"/>
<rect x="782" y="571" width="1" height="2" fill="#606060"/>
<rect x="800" y="571" width="1" height="2" fill="#606060"/>
<rect x="817" y="571" width="1" height="2" fill="#606060"/>
<rect x="834" y="571" width="1" height="4" fill="#606060"/>
<rect x="851" y="571" width="1" height="2" fill="#606060"/>
<rect x="868" y="571" width="1" height="2" fill="#606060"/>
<rect x="886" y="571" width="1" height="2" fill="#606060"/>
<rect x="903" y="571" width="1" height="2" fill="#606060"/>
<rect x="920" y="571" width="1" height="4" fill="#606060"/>
<rect x="937" y="571" width="1" height="2" fill="#606060"/>
<rect x="954" y="571" width="1" height="2" fill="#606060"/>
<rect x="972" y="571" width="1" height="2" fill="#606060"/>
<rect x="989" y="571" width="1" height="2" fill="#606060"/>
<rect x="1006" y="571" width="1" height="4" fill="#606060"/>
<rect x="1023" y="571" width="1" height="2" fill="#606060"/>
<rect x="1040" y="571" width="1" height="2" fill="#606060"/>
</svg>
<div class="t r" style="left:6px;top:328px;width:70px">30 000</div>
<div class="t r" style="left:6px;top:374px;width:70px">20 000</div>
<div class="t r" style="left:6px;top:420px;width:70px">10 000</div>
<div class="t r" style="left:6px;top:466px;width:70px">0</div>
<div class="t r" style="left:6px;top:512px;width:70px">-10 000</div>
<div class="t r" style="left:6px;top:559px;width:70px">-20 000</div>
<div class="a" style="left:33px;top:547px;width:43px;height:14px;background:#fff"></div>
<div class="t r" style="left:6px;top:548px;width:70px;color:#0000FF">-17 720</div>
<div class="t c" style="left:105.0px;top:578px;width:80px">120 000</div>
<div class="t c" style="left:191.0px;top:578px;width:80px">125 000</div>
<div class="t c" style="left:277.0px;top:578px;width:80px">130 000</div>
<div class="t c" style="left:363.0px;top:578px;width:80px">135 000</div>
<div class="t c" style="left:449.0px;top:578px;width:80px">140 000</div>
<div class="t c" style="left:535.0px;top:578px;width:80px">145 000</div>
<div class="t c" style="left:621.0px;top:578px;width:80px">150 000</div>
<div class="t c" style="left:707.0px;top:578px;width:80px">155 000</div>
<div class="t c" style="left:793.0px;top:578px;width:80px">160 000</div>
<div class="t c" style="left:879.0px;top:578px;width:80px">165 000</div>
<div class="t c" style="left:965.0px;top:578px;width:80px">170 000</div>
<div class="a" style="left:963px;top:296px;width:78px;height:102px;border:1px solid #000;border-radius:8px;background:#fff;box-shadow:2px 2px 0 #000"></div>
<div class="cb" style="left:967px;top:299px;width:12px;height:12px"></div><svg class="a" style="left:969px;top:301px" width="9" height="9"><path d="M1 3.5 L3.5 6.5 L8 1.5" stroke="#000" fill="none" stroke-width="2"/></svg>
<svg class="a" style="left:984px;top:302px" width="22" height="6"><line x1="0" y1="3.5" x2="21" y2="3.5" stroke="#8080FF" stroke-width="1" stroke-dasharray="3 3"/></svg>
<div class="t" style="left:1007px;top:300px;color:#8080FF">06.01</div>
<div class="cb" style="left:967px;top:316px;width:12px;height:12px"></div><svg class="a" style="left:969px;top:318px" width="9" height="9"><path d="M1 3.5 L3.5 6.5 L8 1.5" stroke="#000" fill="none" stroke-width="2"/></svg>
<svg class="a" style="left:984px;top:319px" width="22" height="6"><line x1="0" y1="3.5" x2="21" y2="3.5" stroke="#5858FF" stroke-width="1" stroke-dasharray="9 3 3 3"/></svg>
<div class="t" style="left:1007px;top:317px;color:#5858FF">07.01</div>
<div class="cb" style="left:967px;top:332px;width:12px;height:12px"></div><svg class="a" style="left:969px;top:334px" width="9" height="9"><path d="M1 3.5 L3.5 6.5 L8 1.5" stroke="#000" fill="none" stroke-width="2"/></svg>
<svg class="a" style="left:984px;top:335px" width="22" height="6"><line x1="0" y1="3.5" x2="21" y2="3.5" stroke="#2C2CFF" stroke-width="1" stroke-dasharray="9 6 3 6"/></svg>
<div class="t" style="left:1007px;top:333px;color:#2C2CFF">08.01</div>
<div class="cb" style="left:967px;top:349px;width:12px;height:12px"></div><svg class="a" style="left:969px;top:351px" width="9" height="9"><path d="M1 3.5 L3.5 6.5 L8 1.5" stroke="#000" fill="none" stroke-width="2"/></svg>
<svg class="a" style="left:984px;top:352px" width="22" height="6"><line x1="0" y1="3.5" x2="21" y2="3.5" stroke="#0000F0" stroke-width="1"/></svg>
<div class="t" style="left:1007px;top:350px;color:#0000F0">11.01</div>
<div class="cb" style="left:967px;top:366px;width:12px;height:12px"></div><svg class="a" style="left:969px;top:368px" width="9" height="9"><path d="M1 3.5 L3.5 6.5 L8 1.5" stroke="#000" fill="none" stroke-width="2"/></svg>
<svg class="a" style="left:984px;top:369px" width="22" height="6"><line x1="0" y1="3.5" x2="21" y2="3.5" stroke="#000098" stroke-width="1"/></svg>
<div class="t" style="left:1007px;top:367px;color:#000098">13.01</div>
<div class="cb" style="left:967px;top:383px;width:12px;height:12px"></div><svg class="a" style="left:969px;top:385px" width="9" height="9"><path d="M1 3.5 L3.5 6.5 L8 1.5" stroke="#000" fill="none" stroke-width="2"/></svg>
<svg class="a" style="left:984px;top:386px" width="22" height="6"><line x1="0" y1="3" x2="21" y2="3" stroke="#00008C" stroke-width="2"/></svg>
<div class="t" style="left:1007px;top:384px;color:#00008C">15.01</div>
<svg class="a" style="left:0;top:0" width="1080" height="628"><line x1="1006.5" y1="297" x2="1006.5" y2="402" stroke="#B6B6BE" stroke-dasharray="3 3"/><line x1="964" y1="334.5" x2="1041" y2="334.5" stroke="#B6B6BE" stroke-dasharray="3 3"/><line x1="964" y1="380.5" x2="1041" y2="380.5" stroke="#B6B6BE" stroke-dasharray="3 3"/></svg>

</body></html>
